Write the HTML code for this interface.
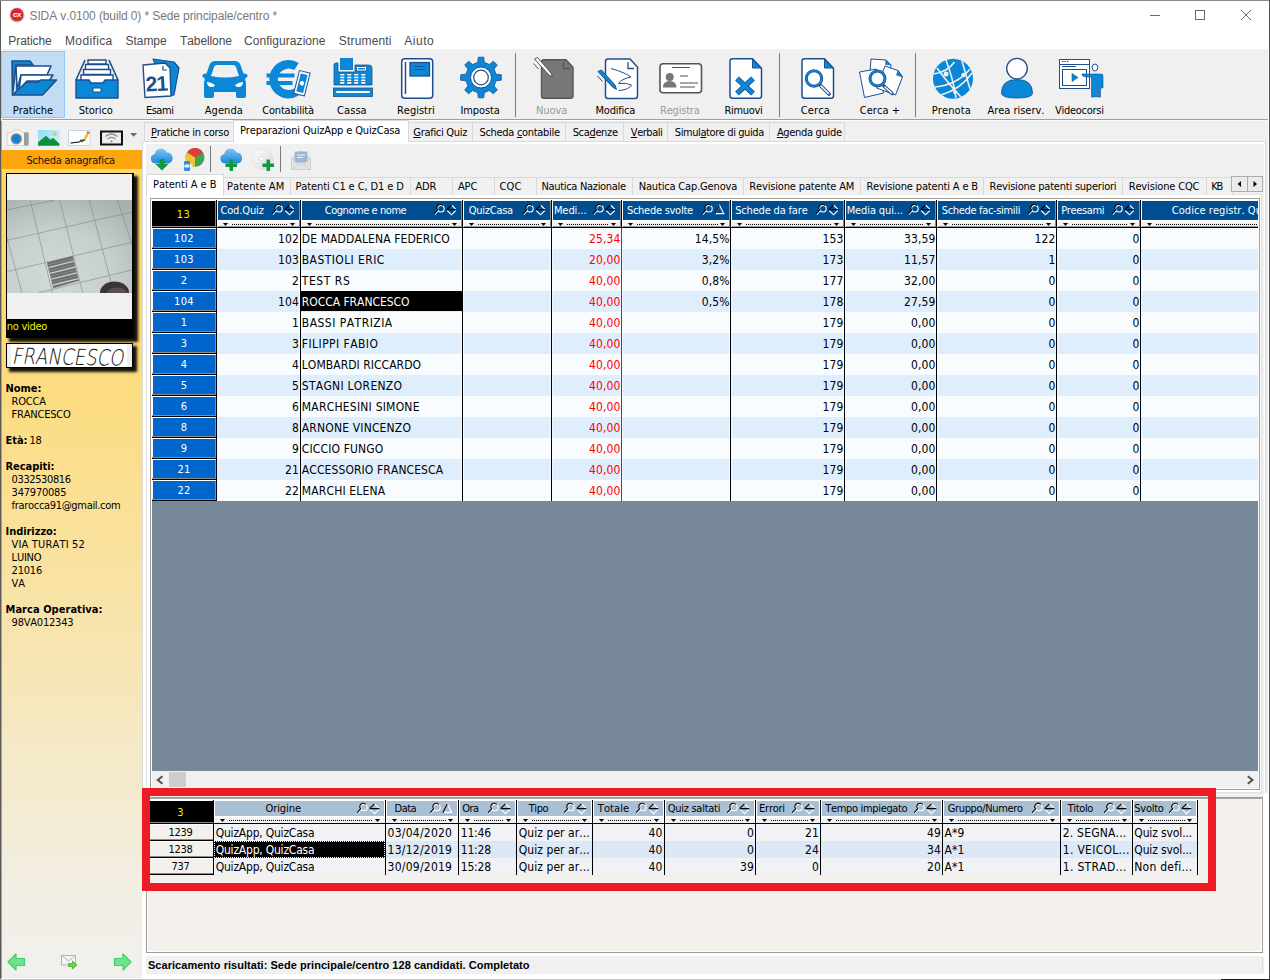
<!DOCTYPE html><html lang="it"><head><meta charset="utf-8"><title>SIDA v.0100 (build 0) * Sede principale/centro *</title><style>
*{box-sizing:border-box;margin:0;padding:0}
html,body{width:1270px;height:980px;overflow:hidden;background:#fff}
body{position:relative;font-family:'Liberation Sans',sans-serif;font-size:11px;color:#000;font-kerning:none}
.a{position:absolute}
.t{position:absolute;white-space:pre;line-height:1}
.tah{font-family:'DejaVu Sans Condensed','Liberation Sans',sans-serif}
svg{position:absolute;overflow:visible}
</style></head><body>
<div class="a" style="left:0px;top:0px;width:1270px;height:980px;background:#fff;"></div>
<div class="a" style="left:0px;top:0px;width:1px;height:980px;background:#5a5a5a;"></div>
<div class="a" style="left:1px;top:121px;width:1px;height:857px;background:#a2a2a2;"></div>
<div class="a" style="left:0px;top:0px;width:1270px;height:1px;background:#8a8a8a;"></div>
<div class="a" style="left:1269px;top:0px;width:1px;height:980px;background:#555;"></div>
<div class="a" style="left:0px;top:979px;width:1221px;height:1px;background:#c4c4c4;"></div>
<div class="a" style="left:1221px;top:979px;width:49px;height:1px;background:#1c1c1c;"></div>
<svg style="left:9px;top:7px" width="16" height="16" viewBox="0 0 16 16"><circle cx="8" cy="8" r="7.6" fill="#b9b9b9"/><circle cx="8" cy="7.7" r="6.4" fill="#e0202a"/><text x="8" y="10.200" font-family="Liberation Sans,sans-serif" font-size="8" font-weight="bold" fill="#fff" text-anchor="middle" letter-spacing="-.5">cx</text></svg>
<div class="t" style="left:29.5px;top:10px;font-size:12px;color:#7a7a7a;letter-spacing:-0.11px;">SIDA v.0100 (build 0) * Sede principale/centro *</div>
<svg style="left:1140px;top:0" width="128" height="30" viewBox="0 0 128 30"><path d="M10 15.5h10" stroke="#6a6a6a" stroke-width="1"/><rect x="55.5" y="10.5" width="9" height="9" fill="none" stroke="#6a6a6a" stroke-width="1"/><path d="M101 10l10 10M111 10l-10 10" stroke="#6a6a6a" stroke-width="1"/></svg>
<div class="t" style="left:8.3px;top:35px;font-size:12px;color:#4a4a4a;letter-spacing:-0.076px;">Pratiche</div>
<div class="t" style="left:65px;top:35px;font-size:12px;color:#4a4a4a;letter-spacing:0.373px;">Modifica</div>
<div class="t" style="left:125.6px;top:35px;font-size:12px;color:#4a4a4a;letter-spacing:-0.072px;">Stampe</div>
<div class="t" style="left:180px;top:35px;font-size:12px;color:#4a4a4a;letter-spacing:-0.097px;">Tabellone</div>
<div class="t" style="left:244px;top:35px;font-size:12px;color:#4a4a4a;letter-spacing:0.06px;">Configurazione</div>
<div class="t" style="left:338.8px;top:35px;font-size:12px;color:#4a4a4a;letter-spacing:0.168px;">Strumenti</div>
<div class="t" style="left:404.3px;top:35px;font-size:12px;color:#4a4a4a;letter-spacing:0.535px;">Aiuto</div>
<div class="a" style="left:2px;top:49px;width:1266px;height:70px;background:#f0f0f0;"></div>
<div class="a" style="left:2px;top:119px;width:1266px;height:1px;background:#a0a0a0;"></div>
<div class="a" style="left:2px;top:120px;width:1266px;height:1px;background:#fafafa;"></div>
<div class="a" style="left:2px;top:121px;width:1266px;height:857px;background:#f0f0f0;"></div>
<div class="a" style="left:1px;top:51px;width:64px;height:67px;background:#c1dcf3;border:1px solid #92c9f5;"></div>
<div class="a" style="left:515px;top:53px;width:1px;height:64px;background:#7b7b7b;"></div>
<div class="a" style="left:779px;top:53px;width:1px;height:64px;background:#7b7b7b;"></div>
<div class="a" style="left:915px;top:53px;width:1px;height:64px;background:#7b7b7b;"></div>
<div class="t" style="left:12.8px;top:105px;font-size:11px;color:#000;font-family:'DejaVu Sans Condensed','Liberation Sans',sans-serif;letter-spacing:-0.035px;">Pratiche</div>
<div class="t" style="left:78.8px;top:105px;font-size:11px;color:#000;font-family:'DejaVu Sans Condensed','Liberation Sans',sans-serif;letter-spacing:-0.072px;">Storico</div>
<div class="t" style="left:145.9px;top:105px;font-size:11px;color:#000;font-family:'DejaVu Sans Condensed','Liberation Sans',sans-serif;letter-spacing:-0.469px;">Esami</div>
<div class="t" style="left:204.8px;top:105px;font-size:11px;color:#000;font-family:'DejaVu Sans Condensed','Liberation Sans',sans-serif;letter-spacing:0.047px;">Agenda</div>
<div class="t" style="left:262.2px;top:105px;font-size:11px;color:#000;font-family:'DejaVu Sans Condensed','Liberation Sans',sans-serif;letter-spacing:-0.177px;">Contabilità</div>
<div class="t" style="left:337.1px;top:105px;font-size:11px;color:#000;font-family:'DejaVu Sans Condensed','Liberation Sans',sans-serif;letter-spacing:0.06px;">Cassa</div>
<div class="t" style="left:397.0px;top:105px;font-size:11px;color:#000;font-family:'DejaVu Sans Condensed','Liberation Sans',sans-serif;letter-spacing:-0.008px;">Registri</div>
<div class="t" style="left:460.5px;top:105px;font-size:11px;color:#000;font-family:'DejaVu Sans Condensed','Liberation Sans',sans-serif;letter-spacing:-0.117px;">Imposta</div>
<div class="t" style="left:536.0px;top:105px;font-size:11px;color:#9a9a9a;font-family:'DejaVu Sans Condensed','Liberation Sans',sans-serif;letter-spacing:-0.089px;">Nuova</div>
<div class="t" style="left:595.5px;top:105px;font-size:11px;color:#000;font-family:'DejaVu Sans Condensed','Liberation Sans',sans-serif;letter-spacing:-0.225px;">Modifica</div>
<div class="t" style="left:660.0px;top:105px;font-size:11px;color:#9a9a9a;font-family:'DejaVu Sans Condensed','Liberation Sans',sans-serif;letter-spacing:-0.196px;">Registra</div>
<div class="t" style="left:724.5px;top:105px;font-size:11px;color:#000;font-family:'DejaVu Sans Condensed','Liberation Sans',sans-serif;letter-spacing:-0.317px;">Rimuovi</div>
<div class="t" style="left:800.7px;top:105px;font-size:11px;color:#000;font-family:'DejaVu Sans Condensed','Liberation Sans',sans-serif;letter-spacing:0.139px;">Cerca</div>
<div class="t" style="left:859.7px;top:105px;font-size:11px;color:#000;font-family:'DejaVu Sans Condensed','Liberation Sans',sans-serif;letter-spacing:0.053px;">Cerca +</div>
<div class="t" style="left:931.8px;top:105px;font-size:11px;color:#000;font-family:'DejaVu Sans Condensed','Liberation Sans',sans-serif;letter-spacing:0.089px;">Prenota</div>
<div class="t" style="left:987.5px;top:105px;font-size:11px;color:#000;font-family:'DejaVu Sans Condensed','Liberation Sans',sans-serif;letter-spacing:-0.034px;">Area riserv.</div>
<div class="t" style="left:1055.0px;top:105px;font-size:11px;color:#000;font-family:'DejaVu Sans Condensed','Liberation Sans',sans-serif;letter-spacing:-0.275px;">Videocorsi</div>
<svg style="left:0;top:0" width="1270" height="120" viewBox="0 0 1270 120"><path d="M12 61h18l3 4h-17l-3.5 30z" fill="#0b87d8" stroke="#1d4f8d" stroke-width="1.6" stroke-linejoin="round"/><path d="M16 66h35l-4 9h-26l-4 15z" fill="#fff" stroke="#1d4f8d" stroke-width="1.6" stroke-linejoin="round"/><path d="M21 75h32l-4 6h-22l-8 9z" fill="#fff" stroke="#1d4f8d" stroke-width="1.6" stroke-linejoin="round"/><path d="M12.5 95l14-13h12l2-2h16l-14 15z" fill="#0b87d8" stroke="#1d4f8d" stroke-width="1.6" stroke-linejoin="round"/><path d="M76 80l9-20M118 80l-9-20" stroke="#1d4f8d" stroke-width="1.6" fill="none"/><path d="M88 60h18v4h-18zM85.5 64.500h23v5h-23zM83.500 69.500h27v5h-27zM81 75h32v9h-32z" fill="#fff" stroke="#1d4f8d" stroke-width="1.4"/><path d="M76 80h13l2 3h12l2-3h13v18h-42z" fill="#0b87d8" stroke="#1d4f8d" stroke-width="1.4" stroke-linejoin="round"/><rect x="93" y="88" width="8" height="4" rx="1" fill="#fff" stroke="#1d4f8d" stroke-width="1"/><path d="M153 59l21 3 5 6-5 27-5 1z" fill="#0b87d8" stroke="#1d4f8d" stroke-width="1.2" stroke-linejoin="round"/><path d="M143 65l22-2 5 5 1 28-26 1.500z" fill="#fff" stroke="#1d4f8d" stroke-width="1.4" stroke-linejoin="round"/><path d="M163 66v4h4" fill="none" stroke="#1d4f8d" stroke-width="1.2"/><text x="156.300" y="91" font-family="Liberation Sans,sans-serif" font-weight="bold" font-size="21" fill="#1d4f8d" text-anchor="middle" transform="rotate(-3 156 82)" letter-spacing="-1">21</text><path d="M204 78q-2-1-1.500-3 1-2 4-1.500l3-8.500q1.500-4 6-4h19q4.500 0 6 4l3 8.500q3-.5 4 1.500.5 2-1.500 3l-1 1q1 2 1 5v12q0 2-2 2h-6q-2 0-2-2v-4h-22v4q0 2-2 2h-6q-2 0-2-2v-12q0-3 1-5z" fill="#0b87d8"/><path d="M211 76l3-9q.7-2 3-2h16q2.300 0 3 2l3 9q-7 1.500-14 1.500t-14-1.500z" fill="#f0f0f0"/><path d="M207 82q4 0 8 3-.5 2-3 2-5 0-5-5zM243 82q-4 0-8 3 .5 2 3 2 5 0 5-5z" fill="#fff"/><path d="M296.500 66.500a15 15 0 1 0 0 25.500" fill="none" stroke="#0b87d8" stroke-width="8.500"/><path d="M266.500 73.500h28v4h-28zM266.500 81h26v4h-26z" fill="#0b87d8"/><g transform="rotate(14 302 83)"><rect x="296.500" y="71.500" width="11" height="23.500" fill="#fff" stroke="#1d4f8d" stroke-width="1"/><rect x="298.500" y="74" width="7" height="18.500" fill="#0b87d8"/><circle cx="302" cy="83.300" r="2.300" fill="#fff"/></g><rect x="340" y="58" width="13" height="12" fill="#0b87d8"/><path d="M334 65q0-2 2-2h2v9h17v-7h14q3 0 3 3v17h-38z" fill="#0b87d8" stroke="#1d4f8d" stroke-width=".8"/><rect x="356.500" y="66.500" width="10" height="4.500" rx="1" fill="#fff" stroke="#1d4f8d" stroke-width=".8"/><rect x="358" y="68" width="7" height="1.500" fill="#0b87d8"/><rect x="340" y="74.0" width="4.500" height="1.600" rx=".8" fill="#fff"/><rect x="340" y="76.7" width="4.500" height="1.600" rx=".8" fill="#fff"/><rect x="340" y="79.4" width="4.500" height="1.600" rx=".8" fill="#fff"/><rect x="340" y="82.1" width="4.500" height="1.600" rx=".8" fill="#fff"/><rect x="347" y="74.0" width="4.500" height="1.600" rx=".8" fill="#fff"/><rect x="347" y="76.7" width="4.500" height="1.600" rx=".8" fill="#fff"/><rect x="347" y="79.4" width="4.500" height="1.600" rx=".8" fill="#fff"/><rect x="347" y="82.1" width="4.500" height="1.600" rx=".8" fill="#fff"/><rect x="354" y="74.0" width="4.500" height="1.600" rx=".8" fill="#fff"/><rect x="354" y="76.7" width="4.500" height="1.600" rx=".8" fill="#fff"/><rect x="354" y="79.4" width="4.500" height="1.600" rx=".8" fill="#fff"/><rect x="354" y="82.1" width="4.500" height="1.600" rx=".8" fill="#fff"/><rect x="361" y="74.0" width="4.500" height="1.600" rx=".8" fill="#fff"/><rect x="361" y="76.7" width="4.500" height="1.600" rx=".8" fill="#fff"/><rect x="361" y="79.4" width="4.500" height="1.600" rx=".8" fill="#fff"/><rect x="361" y="82.1" width="4.500" height="1.600" rx=".8" fill="#fff"/><rect x="333.500" y="88" width="39" height="8.500" fill="#0b87d8" stroke="#1d4f8d" stroke-width=".8"/><rect x="336" y="91" width="34" height="2" rx="1" fill="#fff"/><rect x="401.700" y="58.700" width="31" height="39.500" rx="3" fill="#fff" stroke="#1d4f8d" stroke-width="1.500"/><path d="M405.500 62v32" stroke="#1d4f8d" stroke-width="1.500"/><rect x="410" y="62.500" width="19.500" height="13.500" fill="#0b87d8" stroke="#1d4f8d" stroke-width="1.300"/><path d="M414.500 66.500h10M414.500 69.500h10" stroke="#1d4f8d" stroke-width="1.200"/><path d="M478.27 57.18 L483.73 57.18 L484.26 62.35 L489.41 64.48 L493.44 61.20 L497.30 65.06 L494.02 69.09 L496.15 74.24 L501.32 74.77 L501.32 80.23 L496.15 80.76 L494.02 85.91 L497.30 89.94 L493.44 93.80 L489.41 90.52 L484.26 92.65 L483.73 97.82 L478.27 97.82 L477.74 92.65 L472.59 90.52 L468.56 93.80 L464.70 89.94 L467.98 85.91 L465.85 80.76 L460.68 80.23 L460.68 74.77 L465.85 74.24 L467.98 69.09 L464.70 65.06 L468.56 61.20 L472.59 64.48 L477.74 62.35Z" fill="#0b87d8" stroke="#1d4f8d" stroke-width=".8" stroke-linejoin="round"/><circle cx="481" cy="77.500" r="10.500" fill="#fff" stroke="#1d4f8d" stroke-width="1"/><circle cx="481" cy="77.500" r="7.300" fill="#fff" stroke="#1d4f8d" stroke-width="1.200"/><path d="M544 59.700h22l7 7.500v28.500q0 2.500-2.500 2.500h-26.500q-2.500 0-2.500-2.500v-33.500q0-2.500 2.500-2.500z" fill="#777" stroke="#555" stroke-width="1.400"/><path d="M563.500 62v6.500h6.500" fill="none" stroke="#555" stroke-width="1.400"/><path d="M534.500 59l3-1.500 13.500 15.500 1.500 4-3.500-2z" fill="#fff" stroke="#555" stroke-width="1"/><path d="M533.500 63.500l5 5.500" stroke="#555" stroke-width="1"/><path d="M608 59h22l7.500 8v29q0 2.500-2.500 2.500h-27q-2.500 0-2.500-2.500v-34.500q0-2.500 2.500-2.500z" fill="#fff" stroke="#1d4f8d" stroke-width="1.500"/><path d="M628 62v6.500h6" fill="none" stroke="#1d4f8d" stroke-width="1.300"/><path d="M611 68.500q14 4 20 8.500-10 2-12.500 6.500 8-1 13 1.500-3 5-13 5.500" fill="none" stroke="#1d4f8d" stroke-width="1"/><path d="M598 71.500l3.500-1.500 13.500 15 1.500 4.500-4-2.500z" fill="#0b87d8" stroke="#1d4f8d" stroke-width="1"/><path d="M597.500 76l5 5.500" stroke="#1d4f8d" stroke-width="1"/><rect x="660" y="63.800" width="41.500" height="29" rx="3" fill="#fff" stroke="#555" stroke-width="1.600"/><path d="M672 67.500h18" stroke="#555" stroke-width="1"/><path d="M680 76h8M680 83h18M680 87h15" stroke="#8a8a8a" stroke-width="1.400"/><circle cx="669.700" cy="77" r="4" fill="#777"/><path d="M663 87.500q0-6.500 6.700-6.500t6.700 6.500z" fill="#777"/><path d="M732.500 58.700h20l9 9.500v27.500q0 2.500-2.500 2.500h-26.500q-2.500 0-2.500-2.500v-34.500q0-2.500 2.500-2.500z" fill="#fff" stroke="#1d4f8d" stroke-width="1.500"/><path d="M752.500 59.500v8.500h8.500z" fill="#0b87d8" stroke="#1d4f8d" stroke-width="1"/><path d="M737 78.500l16 15M753 78.500l-16 15" stroke="#1d4f8d" stroke-width="5.500"/><path d="M737 78.500l16 15M753 78.500l-16 15" stroke="#0b87d8" stroke-width="3.800"/><path d="M804.500 58.700h20l9 9.500v27.500q0 2.500-2.500 2.500h-26.500q-2.500 0-2.500-2.500v-34.500q0-2.500 2.500-2.500z" fill="#fff" stroke="#1d4f8d" stroke-width="1.500"/><path d="M824.500 59.500v8.500h8.500z" fill="#0b87d8" stroke="#1d4f8d" stroke-width="1"/><path d="M820 85l9 9" stroke="#1d4f8d" stroke-width="3.600" stroke-linecap="round"/><path d="M821 86l7.500 7.500" stroke="#fff" stroke-width="1.600" stroke-linecap="round"/><circle cx="814" cy="78.500" r="7.700" fill="#fff" stroke="#1d4f8d" stroke-width="3"/><circle cx="814" cy="78.500" r="7.700" fill="none" stroke="#0b87d8" stroke-width="1.600"/><path d="M871 59l15 1 5 5-2 22-20-2z" fill="#fff" stroke="#1d4f8d" stroke-width="1"/><path d="M886 60l5 5-5.500-.5z" fill="#0b87d8" stroke="#1d4f8d" stroke-width=".6"/><path d="M859.500 72l17-3 7 24-19 4.500z" fill="#fff" stroke="#1d4f8d" stroke-width="1"/><path d="M885 66l13 4.500 4.500 6.500-7 18-19-7z" fill="#fff" stroke="#1d4f8d" stroke-width="1"/><path d="M898 70.500l4.500 6.500-6-2z" fill="#0b87d8" stroke="#1d4f8d" stroke-width=".6"/><path d="M884 86l8 7.500" stroke="#1d4f8d" stroke-width="3.400" stroke-linecap="round"/><path d="M885 87l6.500 6" stroke="#fff" stroke-width="1.500" stroke-linecap="round"/><circle cx="877.500" cy="78.500" r="7.500" fill="#fff" stroke="#1d4f8d" stroke-width="3"/><circle cx="877.500" cy="78.500" r="7.500" fill="none" stroke="#0b87d8" stroke-width="1.600"/><circle cx="953" cy="78.700" r="20" fill="#0b87d8"/><g stroke="#f0f0f0" stroke-width="1.600" fill="none"><path d="M933.500 74q14-2 21-12M935 87q22-2 35-18M941 95q20-6 31-22M946 60q8 22 10 38M962 61q4 14 8 28M937 68q10 14 24 29"/></g><circle cx="946" cy="74" r="2.500" fill="#f0f0f0"/><circle cx="963.500" cy="75" r="2.200" fill="#f0f0f0"/><circle cx="955" cy="92" r="2" fill="#f0f0f0"/><path d="M1001.500 93q0-13.500 15.500-13.500t15.500 13.500q0 5-15.500 5t-15.500-5z" fill="#0b87d8" stroke="#1d4f8d" stroke-width=".8"/><circle cx="1017" cy="68.600" r="10.300" fill="#fff" stroke="#1d4f8d" stroke-width="1.300"/><rect x="1059.500" y="59.500" width="30" height="29" fill="#fff" stroke="#1d4f8d" stroke-width="1"/><path d="M1059.500 64.500h30M1062 61.500h1.500M1064.500 61.500h1.500M1067 61.500h1.500" stroke="#1d4f8d" stroke-width="1"/><path d="M1062 66.500h14" stroke="#1d4f8d" stroke-width="1"/><rect x="1062.500" y="69.500" width="24" height="16" fill="#fff" stroke="#1d4f8d" stroke-width="1"/><path d="M1072 73.500l6 4-6 4z" fill="#0b87d8" stroke="#1d4f8d" stroke-width=".6"/><ellipse cx="1095" cy="67.500" rx="2.800" ry="3.500" fill="#fff" stroke="#1d4f8d" stroke-width="1"/><path d="M1082 74h19q2 0 2 2v12h-2.500v9h-4v-9h-1v9h-4v-20h-6l-3.500-1.500z" fill="#0b87d8" stroke="#1d4f8d" stroke-width=".6"/></svg>
<svg style="left:0;top:0" width="145" height="150" viewBox="0 0 145 150"><path d="M7 133.500q0-1 1-1h3.500l2-2.500h7l2 2.500h5q1 0 1 1v11q0 1-1 1h-19.500q-1 0-1-1z" fill="#f4f4f4" stroke="#c9c9c9" stroke-width=".8"/><rect x="24" y="132.500" width="4.500" height="13" rx="1" fill="#9c9c9c"/><circle cx="16.300" cy="138.800" r="5.600" fill="#8a8a8a"/><circle cx="16.300" cy="138.800" r="4.200" fill="#0d83d6"/><defs><linearGradient id="sky" x1="0" y1="0" x2="1" y2="1"><stop offset="0" stop-color="#8fdcf6"/><stop offset="1" stop-color="#d9f3fb"/></linearGradient></defs><rect x="38" y="130" width="21.500" height="15.800" fill="url(#sky)"/><circle cx="54.500" cy="134" r="2" fill="#f0c04a"/><path d="M38 145.800v-3.500l8-6.500 4.500 4 2.500-2 6.500 6v2z" fill="#0b9140"/><rect x="68.500" y="130.500" width="21.500" height="15" fill="#fff" stroke="#c9d3e6" stroke-width="1"/><path d="M70.500 143.200q4-1 6-.8t3.500-.8l1-1.500 1 1.500 1.500-2.500" fill="none" stroke="#333" stroke-width="1.200"/><path d="M83.500 139.500l3.300-7 2.200 1-3.300 7-2.400.8z" fill="#eeb23d"/><path d="M86.800 132.500l.6-1.300 2.200 1-.6 1.300z" fill="#e02a3a"/><path d="M83.300 141.300l.2-1.800 2.200 1z" fill="#333"/><rect x="101" y="131.500" width="21" height="13" fill="#ececec" stroke="#111" stroke-width="2"/><g fill="none" stroke="#8c8c8c" stroke-width="1.300"><path d="M105.500 136.500q6-5 12 0"/><path d="M107.500 139q4-3.300 8 0"/></g><circle cx="111.500" cy="141.500" r="1.100" fill="#8c8c8c"/><path d="M130 133h7.200l-3.600 3.800z" fill="#6d6d6d"/></svg>
<div class="a" style="left:2px;top:150px;width:140px;height:19px;background:#fea60d;"></div>
<div class="t" style="left:26.4px;top:155px;font-size:11px;color:#1a1200;font-family:'DejaVu Sans Condensed','Liberation Sans',sans-serif;letter-spacing:-0.209px;">Scheda anagrafica</div>
<div class="a" style="left:2px;top:169px;width:140px;height:809px;background:linear-gradient(180deg,#ffd966 0%,#fcdd84 30%,#f7e5b2 60%,#f2eee2 88%,#f0f0ee 100%);"></div>
<div class="a" style="left:6px;top:173px;width:128px;height:165px;background:#000;box-shadow:3px 3px 2.500px 0.500px rgba(0,0,0,.92);"></div>
<div class="a" style="left:7px;top:174px;width:125px;height:145px;background:#f0f0f0;"></div>
<svg style="left:0;top:0" width="145" height="300" viewBox="0 0 145 300"><defs><radialGradient id="cg" cx=".38" cy=".8" r=".95"><stop offset="0" stop-color="#d3dbd9"/><stop offset=".5" stop-color="#c6cfcd"/><stop offset="1" stop-color="#a5b0af"/></radialGradient><clipPath id="pc"><rect x="7" y="200" width="125" height="93"/></clipPath></defs><g clip-path="url(#pc)"><rect x="7" y="200" width="125" height="93" fill="url(#cg)"/><g stroke="#7b8684" stroke-width=".7" fill="none" opacity=".8"><path d="M6.800 210L55 200M6.800 240.400L132.400 211.900M6.800 271.600L132.400 242.200M38.600 292.800L132.400 269.800"/><path d="M30.300 200.800L52.400 292.800M59.700 200L82.700 292.800M89.200 200L114 292.800M117.600 200L132.400 246M6.800 237.600L22 292.800"/></g><path d="M46.900 262.400L72.600 256L79 280.800L53.300 288.200Z" fill="#6b7170"/><g stroke="#c9cfce" stroke-width="1.300"><path d="M48.500 267.600L73.800 261.200M50 273.400L75.300 267M51.500 279.200L76.800 272.800M53 285L78.300 278.600"/></g><g stroke="#8f9695" stroke-width=".6"><path d="M47.700 265L73.200 258.600M49.300 270.600L74.600 264.200M50.800 276.400L76.100 270M52.300 282.200L77.600 275.800"/></g><ellipse cx="114.500" cy="292.500" rx="14.500" ry="11" fill="#3d3435"/><ellipse cx="117" cy="293.500" rx="10" ry="6" fill="#5a4f50"/></g></svg>
<div class="t" style="left:6.8px;top:321px;font-size:11px;color:#f2f200;font-family:'DejaVu Sans Condensed','Liberation Sans',sans-serif;letter-spacing:-0.274px;">no video</div>
<div class="a" style="left:6px;top:343px;width:127px;height:25px;background:#fff;border:1px solid #000;box-shadow:3px 3px 2.500px 0.500px rgba(0,0,0,.92);"></div>
<div class="a" style="left:7px;top:344px;width:4px;height:23px;background:#efefef;"></div>
<div class="a" style="left:127px;top:344px;width:5px;height:23px;background:#efefef;"></div>
<svg style="left:0;top:340px" width="145" height="32" viewBox="0 340 145 32"><text x="11.500" y="364.500" font-family="DejaVu Sans Light,DejaVu Sans,Liberation Sans,sans-serif" font-weight="200" font-size="22" textLength="112" lengthAdjust="spacingAndGlyphs" fill="#111" stroke="none" transform="translate(64.500 0) skewX(-10) rotate(1 60 356)">FRANCESCO</text></svg>
<div class="t" style="left:5.5px;top:383px;font-size:11px;color:#000;font-family:'DejaVu Sans Condensed','Liberation Sans',sans-serif;font-weight:bold;letter-spacing:-0.05px;">Nome:</div>
<div class="t" style="left:11.6px;top:396px;font-size:11px;color:#000;font-family:'DejaVu Sans Condensed','Liberation Sans',sans-serif;letter-spacing:-0.22px;">ROCCA</div>
<div class="t" style="left:11.6px;top:409px;font-size:11px;color:#000;font-family:'DejaVu Sans Condensed','Liberation Sans',sans-serif;letter-spacing:-0.22px;">FRANCESCO</div>
<div class="t" style="left:5.5px;top:435px;font-size:11px;color:#000;font-family:'DejaVu Sans Condensed','Liberation Sans',sans-serif;font-weight:bold;letter-spacing:-0.05px;">Età:</div>
<div class="t" style="left:29.5px;top:435px;font-size:11px;color:#000;font-family:'DejaVu Sans Condensed','Liberation Sans',sans-serif;letter-spacing:-0.22px;">18</div>
<div class="t" style="left:5.5px;top:461px;font-size:11px;color:#000;font-family:'DejaVu Sans Condensed','Liberation Sans',sans-serif;font-weight:bold;letter-spacing:-0.05px;">Recapiti:</div>
<div class="t" style="left:11.6px;top:474px;font-size:11px;color:#000;font-family:'DejaVu Sans Condensed','Liberation Sans',sans-serif;letter-spacing:-0.395px;">0332530816</div>
<div class="t" style="left:11.6px;top:487px;font-size:11px;color:#000;font-family:'DejaVu Sans Condensed','Liberation Sans',sans-serif;letter-spacing:-0.22px;">347970085</div>
<div class="t" style="left:11.6px;top:500px;font-size:11px;color:#000;font-family:'DejaVu Sans Condensed','Liberation Sans',sans-serif;letter-spacing:-0.311px;">frarocca91@gmail.com</div>
<div class="t" style="left:5.5px;top:526px;font-size:11px;color:#000;font-family:'DejaVu Sans Condensed','Liberation Sans',sans-serif;font-weight:bold;letter-spacing:-0.05px;">Indirizzo:</div>
<div class="t" style="left:11.6px;top:539px;font-size:11px;color:#000;font-family:'DejaVu Sans Condensed','Liberation Sans',sans-serif;letter-spacing:0.165px;">VIA TURATI 52</div>
<div class="t" style="left:11.6px;top:552px;font-size:11px;color:#000;font-family:'DejaVu Sans Condensed','Liberation Sans',sans-serif;letter-spacing:-0.22px;">LUINO</div>
<div class="t" style="left:11.6px;top:565px;font-size:11px;color:#000;font-family:'DejaVu Sans Condensed','Liberation Sans',sans-serif;letter-spacing:-0.22px;">21016</div>
<div class="t" style="left:11.6px;top:578px;font-size:11px;color:#000;font-family:'DejaVu Sans Condensed','Liberation Sans',sans-serif;letter-spacing:-0.22px;">VA</div>
<div class="t" style="left:5.5px;top:604px;font-size:11px;color:#000;font-family:'DejaVu Sans Condensed','Liberation Sans',sans-serif;font-weight:bold;letter-spacing:0.042px;">Marca Operativa:</div>
<div class="t" style="left:11.6px;top:617px;font-size:11px;color:#000;font-family:'DejaVu Sans Condensed','Liberation Sans',sans-serif;letter-spacing:-0.22px;">98VA012343</div>
<svg style="left:0;top:940px" width="145" height="40" viewBox="0 940 145 40"><path d="M0 8.500L8 0.500V5h8.500v7H8v4.500z" transform="translate(8 953.5)" fill="#6fe38a" stroke="#3fcf6e" stroke-width="1.200" stroke-linejoin="round"/><path d="M0 8.500L8 0.500V5h8.500v7H8v4.500z" transform="translate(114.5 953.5) translate(16.500 0) scale(-1 1)" fill="#6fe38a" stroke="#3fcf6e" stroke-width="1.200" stroke-linejoin="round"/><rect x="61.500" y="955.500" width="14" height="9.500" fill="#f4f4f4" stroke="#b5b5b5" stroke-width="1"/><path d="M61.500 955.500l7 5.500 7-5.500" fill="none" stroke="#b5b5b5" stroke-width="1"/><path d="M68.500 963.500h4v-2.500l4.500 4-4.500 4v-2.500h-4z" fill="#63d84a" stroke="#3aa52c" stroke-width=".7"/></svg>
<div class="a" style="left:142px;top:141px;width:1124px;height:819px;background:#fff;border:1px solid #dadada;"></div>
<div class="a" style="left:146px;top:144px;width:1118px;height:814px;background:#f0f0f0;"></div>
<div class="a" style="left:144px;top:122px;width:90px;height:19px;background:#f0f0f0;border:1px solid #d9d9d9;border-bottom:none;"></div>
<div class="t" style="left:151px;top:127px;font-size:11px;color:#000;font-family:'DejaVu Sans Condensed','Liberation Sans',sans-serif;letter-spacing:-0.276px"><u>P</u>ratiche in corso</div>
<div class="a" style="left:408px;top:122px;width:65px;height:19px;background:#f0f0f0;border:1px solid #d9d9d9;border-bottom:none;"></div>
<div class="t" style="left:413.3px;top:127px;font-size:11px;color:#000;font-family:'DejaVu Sans Condensed','Liberation Sans',sans-serif;letter-spacing:-0.298px"><u>G</u>rafici Quiz</div>
<div class="a" style="left:472px;top:122px;width:94px;height:19px;background:#f0f0f0;border:1px solid #d9d9d9;border-bottom:none;"></div>
<div class="t" style="left:479.5px;top:127px;font-size:11px;color:#000;font-family:'DejaVu Sans Condensed','Liberation Sans',sans-serif;letter-spacing:-0.311px">Scheda <u>c</u>ontabile</div>
<div class="a" style="left:565px;top:122px;width:59px;height:19px;background:#f0f0f0;border:1px solid #d9d9d9;border-bottom:none;"></div>
<div class="t" style="left:572.7px;top:127px;font-size:11px;color:#000;font-family:'DejaVu Sans Condensed','Liberation Sans',sans-serif;letter-spacing:-0.348px">Sca<u>d</u>enze</div>
<div class="a" style="left:623px;top:122px;width:45px;height:19px;background:#f0f0f0;border:1px solid #d9d9d9;border-bottom:none;"></div>
<div class="t" style="left:630.8px;top:127px;font-size:11px;color:#000;font-family:'DejaVu Sans Condensed','Liberation Sans',sans-serif;letter-spacing:-0.454px"><u>V</u>erbali</div>
<div class="a" style="left:667px;top:122px;width:103px;height:19px;background:#f0f0f0;border:1px solid #d9d9d9;border-bottom:none;"></div>
<div class="t" style="left:674.8px;top:127px;font-size:11px;color:#000;font-family:'DejaVu Sans Condensed','Liberation Sans',sans-serif;letter-spacing:-0.411px">Simul<u>a</u>tore di guida</div>
<div class="a" style="left:769px;top:122px;width:76px;height:19px;background:#f0f0f0;border:1px solid #d9d9d9;border-bottom:none;"></div>
<div class="t" style="left:776.9px;top:127px;font-size:11px;color:#000;font-family:'DejaVu Sans Condensed','Liberation Sans',sans-serif;letter-spacing:-0.318px"><u>A</u>genda guide</div>
<div class="a" style="left:233px;top:120px;width:176px;height:22px;background:#fff;border:1px solid #d9d9d9;border-bottom:none;"></div>
<div class="t" style="left:240px;top:125px;font-size:11px;color:#000;font-family:'DejaVu Sans Condensed','Liberation Sans',sans-serif;letter-spacing:-0.142px">Preparazioni QuizApp e QuizCasa</div>
<svg style="left:0;top:140px" width="330" height="40" viewBox="0 140 330 40"><defs><linearGradient id="cl" x1="0" y1="0" x2="0" y2="1"><stop offset="0" stop-color="#7cc4f4"/><stop offset="1" stop-color="#1b86dd"/></linearGradient><linearGradient id="cd" x1="0" y1="0" x2="1" y2="1"><stop offset="0" stop-color="#fdfdfd"/><stop offset="1" stop-color="#d8d8d8"/></linearGradient></defs><path transform="translate(150.5 150)" d="M5 13.500a4.800 4.800 0 0 1-.8-9.500 6.500 6.500 0 0 1 12.300-1.500 5.600 5.600 0 0 1 1.500 11z" fill="url(#cl)"/><path d="M159.500 159h5v5h4l-6.500 6.500-6.500-6.500h4z" fill="#0f9a3c"/><circle cx="195" cy="157.500" r="9.500" fill="#3aa655"/><path d="M195 157.500l8-5a9.500 9.500 0 0 0-16 0z" fill="#e23b3b"/><path d="M195 157.500l-8-5a9.500 9.500 0 0 0 8 14.500z" fill="#f1c232"/><ellipse cx="187" cy="166" rx="5.500" ry="3" fill="#fafafa" stroke="#d5d5d5" stroke-width=".7"/><rect x="184" y="161" width="6" height="10" rx="1" fill="#2c8fe6"/><rect x="184.500" y="164.500" width="5" height="3" fill="#eaf4fd"/><path transform="translate(220 150)" d="M5 13.500a4.800 4.800 0 0 1-.8-9.500 6.500 6.500 0 0 1 12.300-1.500 5.600 5.600 0 0 1 1.500 11z" fill="url(#cl)"/><path d="M229.500 159.500h3.500v4h4v3.500h-4v4h-3.500v-4h-4v-3.500h4z" fill="#0f9a3c"/><circle cx="262.500" cy="159" r="10.500" fill="url(#cd)" stroke="#dcdcdc" stroke-width=".7"/><path d="M259 158.500l2.500-2.500 2.500 2.500-2.500 2.500z" fill="#fff" stroke="#cfcfcf" stroke-width=".7"/><path d="M266.500 159.500h3.500v4h4v3.500h-4v4h-3.500v-4h-4v-3.500h4z" fill="#0f9a3c"/><path d="M291.500 158l9.500-7.500 9.500 7.500v11.500h-19z" fill="#e4e4e4" stroke="#c9c9c9" stroke-width=".8"/><rect x="294.500" y="151.500" width="13" height="11" rx="1" fill="#9db7d3"/><path d="M297 155h8M297 157.500h6" stroke="#e9f0f7" stroke-width="1"/><path d="M291.500 169.500l9.500-7 9.500 7M291.500 158l7 6M310.500 158l-7 6" fill="none" stroke="#c9c9c9" stroke-width=".8"/></svg>
<div class="a" style="left:210px;top:146px;width:1px;height:26px;background:#7b7b7b;"></div>
<div class="a" style="left:280px;top:146px;width:1px;height:26px;background:#7b7b7b;"></div>
<div class="a" style="left:146px;top:194px;width:1116px;height:599px;background:#fff;border:1px solid #e2e2e2;"></div>
<div class="a" style="left:223px;top:177px;width:68px;height:18px;background:#f0f0f0;border:1px solid #d9d9d9;border-bottom:none;"></div>
<div class="t" style="left:227px;top:181px;font-size:11px;color:#000;font-family:'DejaVu Sans Condensed','Liberation Sans',sans-serif;letter-spacing:0.055px">Patente AM</div>
<div class="a" style="left:290px;top:177px;width:121px;height:18px;background:#f0f0f0;border:1px solid #d9d9d9;border-bottom:none;"></div>
<div class="t" style="left:295.4px;top:181px;font-size:11px;color:#000;font-family:'DejaVu Sans Condensed','Liberation Sans',sans-serif;letter-spacing:-0.107px">Patenti C1 e C, D1 e D</div>
<div class="a" style="left:410px;top:177px;width:43px;height:18px;background:#f0f0f0;border:1px solid #d9d9d9;border-bottom:none;"></div>
<div class="t" style="left:415.4px;top:181px;font-size:11px;color:#000;font-family:'DejaVu Sans Condensed','Liberation Sans',sans-serif;letter-spacing:-0.083px">ADR</div>
<div class="a" style="left:452px;top:177px;width:43px;height:18px;background:#f0f0f0;border:1px solid #d9d9d9;border-bottom:none;"></div>
<div class="t" style="left:457.9px;top:181px;font-size:11px;color:#000;font-family:'DejaVu Sans Condensed','Liberation Sans',sans-serif;letter-spacing:-0.078px">APC</div>
<div class="a" style="left:494px;top:177px;width:43px;height:18px;background:#f0f0f0;border:1px solid #d9d9d9;border-bottom:none;"></div>
<div class="t" style="left:499.5px;top:181px;font-size:11px;color:#000;font-family:'DejaVu Sans Condensed','Liberation Sans',sans-serif;letter-spacing:0.188px">CQC</div>
<div class="a" style="left:536px;top:177px;width:97px;height:18px;background:#f0f0f0;border:1px solid #d9d9d9;border-bottom:none;"></div>
<div class="t" style="left:541.4px;top:181px;font-size:11px;color:#000;font-family:'DejaVu Sans Condensed','Liberation Sans',sans-serif;letter-spacing:-0.31px">Nautica Nazionale</div>
<div class="a" style="left:632px;top:177px;width:112px;height:18px;background:#f0f0f0;border:1px solid #d9d9d9;border-bottom:none;"></div>
<div class="t" style="left:638.7px;top:181px;font-size:11px;color:#000;font-family:'DejaVu Sans Condensed','Liberation Sans',sans-serif;letter-spacing:-0.167px">Nautica Cap.Genova</div>
<div class="a" style="left:743px;top:177px;width:118px;height:18px;background:#f0f0f0;border:1px solid #d9d9d9;border-bottom:none;"></div>
<div class="t" style="left:749.3px;top:181px;font-size:11px;color:#000;font-family:'DejaVu Sans Condensed','Liberation Sans',sans-serif;letter-spacing:-0.156px">Revisione patente AM</div>
<div class="a" style="left:860px;top:177px;width:124px;height:18px;background:#f0f0f0;border:1px solid #d9d9d9;border-bottom:none;"></div>
<div class="t" style="left:866.4px;top:181px;font-size:11px;color:#000;font-family:'DejaVu Sans Condensed','Liberation Sans',sans-serif;letter-spacing:-0.166px">Revisione patenti A e B</div>
<div class="a" style="left:983px;top:177px;width:140px;height:18px;background:#f0f0f0;border:1px solid #d9d9d9;border-bottom:none;"></div>
<div class="t" style="left:989.5px;top:181px;font-size:11px;color:#000;font-family:'DejaVu Sans Condensed','Liberation Sans',sans-serif;letter-spacing:-0.223px">Revisione patenti superiori</div>
<div class="a" style="left:1122px;top:177px;width:85px;height:18px;background:#f0f0f0;border:1px solid #d9d9d9;border-bottom:none;"></div>
<div class="t" style="left:1128.7px;top:181px;font-size:11px;color:#000;font-family:'DejaVu Sans Condensed','Liberation Sans',sans-serif;letter-spacing:-0.155px">Revisione CQC</div>
<div class="a" style="left:1206px;top:177px;width:27px;height:18px;background:#f0f0f0;border:1px solid #d9d9d9;border-bottom:none;"></div>
<div class="t" style="left:1211.3px;top:181px;font-size:11px;color:#000;font-family:'DejaVu Sans Condensed','Liberation Sans',sans-serif;letter-spacing:-1.381px">KB</div>
<div class="a" style="left:146px;top:174px;width:78px;height:22px;background:#fff;border:1px solid #d9d9d9;border-bottom:none;"></div>
<div class="t" style="left:153px;top:179px;font-size:11px;color:#000;font-family:'DejaVu Sans Condensed','Liberation Sans',sans-serif;letter-spacing:-0.04px">Patenti A e B</div>
<div class="a" style="left:1231px;top:176px;width:17px;height:16px;background:#ebebeb;border:1px solid #adadad;"></div>
<div class="a" style="left:1247px;top:176px;width:16px;height:16px;background:#ebebeb;border:1px solid #adadad;"></div>
<svg style="left:1231px;top:176px" width="32" height="16" viewBox="0 0 32 16"><path d="M10 5v6l-3.500-3z M22.500 5v6l3.500-3z" fill="#000"/></svg>
<div class="a" style="left:150px;top:198px;width:1110px;height:592px;background:#fff;border:1px solid #a0a0a0;"></div>
<div class="a" style="left:152px;top:200px;width:1106px;height:571px;background:#778899;"></div>
<div class="a" style="left:152px;top:200px;width:1106px;height:28px;background:#fff;"></div>
<div class="a" style="left:152px;top:201px;width:63px;height:25px;background:#000;"></div>
<div class="a" style="left:215px;top:201px;width:1px;height:26px;background:#8c8c8c;"></div>
<div class="a" style="left:152px;top:226px;width:64px;height:1px;background:#8c8c8c;"></div>
<div class="t" style="left:152px;top:209px;font-size:11px;color:#f2f200;font-family:'DejaVu Sans Condensed','Liberation Sans',sans-serif;letter-spacing:0.5px;width:63px;text-align:center;">13</div>
<svg style="left:0;top:195px" width="1270" height="40" viewBox="0 195 1270 40"><rect x="218" y="201" width="81" height="19" fill="#004e92"/><path d="M272.8 214.5L276.2 210.60000000000002" stroke="#fff" stroke-width="1.200"/><circle cx="278.9" cy="208.70000000000002" r="3.300" fill="none" stroke="#fff" stroke-width="1.100"/><path d="M272.2 213.9L275.7 210.10000000000002" stroke="#000" stroke-width="1.100"/><path d="M275.6 210.0a3.300 3.300 0 1 1 5.200 -4.300" fill="none" stroke="#000" stroke-width="1.100"/><path d="M289.5 205.0L294.0 209.3M285.2 210.5L289.5 214.8L293.8 210.5" fill="none" stroke="#fff" stroke-width="1.100"/><path d="M285.0 209.3L289.5 205.0M284.7 209.8H294.3" fill="none" stroke="#000" stroke-width="1.100"/><rect x="218" y="222" width="81" height="5" fill="#f0f0f0"/><path d="M223 223h5l-2.500 3z" fill="#000"/><path d="M290 223h5l-2.500 3z" fill="#000"/><path d="M232 224.5H288" stroke="#000" stroke-width="1" stroke-dasharray="1 1"/><rect x="218" y="226" width="81" height="1" fill="#9a9a9a"/><rect x="299" y="201" width="1" height="26" fill="#8c8c8c"/><rect x="302" y="201" width="159" height="19" fill="#004e92"/><path d="M434.8 214.5L438.2 210.60000000000002" stroke="#fff" stroke-width="1.200"/><circle cx="440.9" cy="208.70000000000002" r="3.300" fill="none" stroke="#fff" stroke-width="1.100"/><path d="M434.2 213.9L437.7 210.10000000000002" stroke="#000" stroke-width="1.100"/><path d="M437.6 210.0a3.300 3.300 0 1 1 5.200 -4.300" fill="none" stroke="#000" stroke-width="1.100"/><path d="M451.5 205.0L456.0 209.3M447.2 210.5L451.5 214.8L455.8 210.5" fill="none" stroke="#fff" stroke-width="1.100"/><path d="M447.0 209.3L451.5 205.0M446.7 209.8H456.3" fill="none" stroke="#000" stroke-width="1.100"/><rect x="302" y="222" width="159" height="5" fill="#f0f0f0"/><path d="M307 223h5l-2.500 3z" fill="#000"/><path d="M452 223h5l-2.500 3z" fill="#000"/><path d="M316 224.5H450" stroke="#000" stroke-width="1" stroke-dasharray="1 1"/><rect x="302" y="226" width="159" height="1" fill="#9a9a9a"/><rect x="461" y="201" width="1" height="26" fill="#8c8c8c"/><rect x="464" y="201" width="86" height="19" fill="#004e92"/><path d="M523.8 214.5L527.2 210.60000000000002" stroke="#fff" stroke-width="1.200"/><circle cx="529.9" cy="208.70000000000002" r="3.300" fill="none" stroke="#fff" stroke-width="1.100"/><path d="M523.2 213.9L526.7 210.10000000000002" stroke="#000" stroke-width="1.100"/><path d="M526.6 210.0a3.300 3.300 0 1 1 5.200 -4.300" fill="none" stroke="#000" stroke-width="1.100"/><path d="M540.5 205.0L545.0 209.3M536.2 210.5L540.5 214.8L544.8 210.5" fill="none" stroke="#fff" stroke-width="1.100"/><path d="M536.0 209.3L540.5 205.0M535.7 209.8H545.3" fill="none" stroke="#000" stroke-width="1.100"/><rect x="464" y="222" width="86" height="5" fill="#f0f0f0"/><path d="M469 223h5l-2.500 3z" fill="#000"/><path d="M541 223h5l-2.500 3z" fill="#000"/><path d="M478 224.5H539" stroke="#000" stroke-width="1" stroke-dasharray="1 1"/><rect x="464" y="226" width="86" height="1" fill="#9a9a9a"/><rect x="550" y="201" width="1" height="26" fill="#8c8c8c"/><rect x="553" y="201" width="67" height="19" fill="#004e92"/><path d="M593.8 214.5L597.2 210.60000000000002" stroke="#fff" stroke-width="1.200"/><circle cx="599.9" cy="208.70000000000002" r="3.300" fill="none" stroke="#fff" stroke-width="1.100"/><path d="M593.2 213.9L596.7 210.10000000000002" stroke="#000" stroke-width="1.100"/><path d="M596.6 210.0a3.300 3.300 0 1 1 5.200 -4.300" fill="none" stroke="#000" stroke-width="1.100"/><path d="M610.5 205.0L615.0 209.3M606.2 210.5L610.5 214.8L614.8 210.5" fill="none" stroke="#fff" stroke-width="1.100"/><path d="M606.0 209.3L610.5 205.0M605.7 209.8H615.3" fill="none" stroke="#000" stroke-width="1.100"/><rect x="553" y="222" width="67" height="5" fill="#f0f0f0"/><path d="M558 223h5l-2.500 3z" fill="#000"/><path d="M611 223h5l-2.500 3z" fill="#000"/><path d="M567 224.5H609" stroke="#000" stroke-width="1" stroke-dasharray="1 1"/><rect x="553" y="226" width="67" height="1" fill="#9a9a9a"/><rect x="620" y="201" width="1" height="26" fill="#8c8c8c"/><rect x="623" y="201" width="106" height="19" fill="#004e92"/><path d="M702.8 214.5L706.2 210.60000000000002" stroke="#fff" stroke-width="1.200"/><circle cx="708.9" cy="208.70000000000002" r="3.300" fill="none" stroke="#fff" stroke-width="1.100"/><path d="M702.2 213.9L705.7 210.10000000000002" stroke="#000" stroke-width="1.100"/><path d="M705.6 210.0a3.300 3.300 0 1 1 5.200 -4.300" fill="none" stroke="#000" stroke-width="1.100"/><path d="M715.3 213.60000000000002L719.5 205.3L723.7 213.60000000000002z" fill="none" stroke="#fff" stroke-width="1.200"/><path d="M714.9 213.9L719.3 205.3" stroke="#000" stroke-width="1.200"/><rect x="623" y="222" width="106" height="5" fill="#f0f0f0"/><path d="M628 223h5l-2.500 3z" fill="#000"/><path d="M720 223h5l-2.500 3z" fill="#000"/><path d="M637 224.5H718" stroke="#000" stroke-width="1" stroke-dasharray="1 1"/><rect x="623" y="226" width="106" height="1" fill="#9a9a9a"/><rect x="729" y="201" width="1" height="26" fill="#8c8c8c"/><rect x="732" y="201" width="111" height="19" fill="#004e92"/><path d="M816.8 214.5L820.2 210.60000000000002" stroke="#fff" stroke-width="1.200"/><circle cx="822.9" cy="208.70000000000002" r="3.300" fill="none" stroke="#fff" stroke-width="1.100"/><path d="M816.2 213.9L819.7 210.10000000000002" stroke="#000" stroke-width="1.100"/><path d="M819.6 210.0a3.300 3.300 0 1 1 5.200 -4.300" fill="none" stroke="#000" stroke-width="1.100"/><path d="M833.5 205.0L838.0 209.3M829.2 210.5L833.5 214.8L837.8 210.5" fill="none" stroke="#fff" stroke-width="1.100"/><path d="M829.0 209.3L833.5 205.0M828.7 209.8H838.3" fill="none" stroke="#000" stroke-width="1.100"/><rect x="732" y="222" width="111" height="5" fill="#f0f0f0"/><path d="M737 223h5l-2.500 3z" fill="#000"/><path d="M834 223h5l-2.500 3z" fill="#000"/><path d="M746 224.5H832" stroke="#000" stroke-width="1" stroke-dasharray="1 1"/><rect x="732" y="226" width="111" height="1" fill="#9a9a9a"/><rect x="843" y="201" width="1" height="26" fill="#8c8c8c"/><rect x="846" y="201" width="89" height="19" fill="#004e92"/><path d="M908.8 214.5L912.2 210.60000000000002" stroke="#fff" stroke-width="1.200"/><circle cx="914.9" cy="208.70000000000002" r="3.300" fill="none" stroke="#fff" stroke-width="1.100"/><path d="M908.2 213.9L911.7 210.10000000000002" stroke="#000" stroke-width="1.100"/><path d="M911.6 210.0a3.300 3.300 0 1 1 5.200 -4.300" fill="none" stroke="#000" stroke-width="1.100"/><path d="M925.5 205.0L930.0 209.3M921.2 210.5L925.5 214.8L929.8 210.5" fill="none" stroke="#fff" stroke-width="1.100"/><path d="M921.0 209.3L925.5 205.0M920.7 209.8H930.3" fill="none" stroke="#000" stroke-width="1.100"/><rect x="846" y="222" width="89" height="5" fill="#f0f0f0"/><path d="M851 223h5l-2.500 3z" fill="#000"/><path d="M926 223h5l-2.500 3z" fill="#000"/><path d="M860 224.5H924" stroke="#000" stroke-width="1" stroke-dasharray="1 1"/><rect x="846" y="226" width="89" height="1" fill="#9a9a9a"/><rect x="935" y="201" width="1" height="26" fill="#8c8c8c"/><rect x="938" y="201" width="117" height="19" fill="#004e92"/><path d="M1028.8 214.5L1032.2 210.60000000000002" stroke="#fff" stroke-width="1.200"/><circle cx="1034.9" cy="208.70000000000002" r="3.300" fill="none" stroke="#fff" stroke-width="1.100"/><path d="M1028.2 213.9L1031.7 210.10000000000002" stroke="#000" stroke-width="1.100"/><path d="M1031.6 210.0a3.300 3.300 0 1 1 5.200 -4.300" fill="none" stroke="#000" stroke-width="1.100"/><path d="M1045.5 205.0L1050.0 209.3M1041.2 210.5L1045.5 214.8L1049.8 210.5" fill="none" stroke="#fff" stroke-width="1.100"/><path d="M1041.0 209.3L1045.5 205.0M1040.7 209.8H1050.3" fill="none" stroke="#000" stroke-width="1.100"/><rect x="938" y="222" width="117" height="5" fill="#f0f0f0"/><path d="M943 223h5l-2.500 3z" fill="#000"/><path d="M1046 223h5l-2.500 3z" fill="#000"/><path d="M952 224.5H1044" stroke="#000" stroke-width="1" stroke-dasharray="1 1"/><rect x="938" y="226" width="117" height="1" fill="#9a9a9a"/><rect x="1055" y="201" width="1" height="26" fill="#8c8c8c"/><rect x="1058" y="201" width="81" height="19" fill="#004e92"/><path d="M1112.8 214.5L1116.2 210.60000000000002" stroke="#fff" stroke-width="1.200"/><circle cx="1118.9" cy="208.70000000000002" r="3.300" fill="none" stroke="#fff" stroke-width="1.100"/><path d="M1112.2 213.9L1115.7 210.10000000000002" stroke="#000" stroke-width="1.100"/><path d="M1115.6 210.0a3.300 3.300 0 1 1 5.200 -4.300" fill="none" stroke="#000" stroke-width="1.100"/><path d="M1129.5 205.0L1134.0 209.3M1125.2 210.5L1129.5 214.8L1133.8 210.5" fill="none" stroke="#fff" stroke-width="1.100"/><path d="M1125.0 209.3L1129.5 205.0M1124.7 209.8H1134.3" fill="none" stroke="#000" stroke-width="1.100"/><rect x="1058" y="222" width="81" height="5" fill="#f0f0f0"/><path d="M1063 223h5l-2.500 3z" fill="#000"/><path d="M1130 223h5l-2.500 3z" fill="#000"/><path d="M1072 224.5H1128" stroke="#000" stroke-width="1" stroke-dasharray="1 1"/><rect x="1058" y="226" width="81" height="1" fill="#9a9a9a"/><rect x="1139" y="201" width="1" height="26" fill="#8c8c8c"/><rect x="1142" y="201" width="116" height="19" fill="#004e92"/><rect x="1142" y="222" width="116" height="5" fill="#f0f0f0"/><path d="M1147 223h5l-2.500 3z" fill="#000"/><path d="M1156 224.5H1258" stroke="#000" stroke-width="1" stroke-dasharray="1 1"/><rect x="1142" y="226" width="116" height="1" fill="#9a9a9a"/><rect x="216" y="227" width="1042" height="1" fill="#000"/><rect x="216" y="200" width="1" height="28" fill="#000"/><rect x="300" y="200" width="1" height="28" fill="#000"/><rect x="462" y="200" width="1" height="28" fill="#000"/><rect x="551" y="200" width="1" height="28" fill="#000"/><rect x="621" y="200" width="1" height="28" fill="#000"/><rect x="730" y="200" width="1" height="28" fill="#000"/><rect x="844" y="200" width="1" height="28" fill="#000"/><rect x="936" y="200" width="1" height="28" fill="#000"/><rect x="1056" y="200" width="1" height="28" fill="#000"/><rect x="1140" y="200" width="1" height="28" fill="#000"/><rect x="152" y="227" width="64" height="1" fill="#000"/></svg>
<div class="t" style="left:220.4px;top:205px;font-size:11px;color:#fff;font-family:'DejaVu Sans Condensed','Liberation Sans',sans-serif;letter-spacing:-0.129px;">Cod.Quiz</div>
<div class="t" style="left:324.7px;top:205px;font-size:11px;color:#fff;font-family:'DejaVu Sans Condensed','Liberation Sans',sans-serif;letter-spacing:-0.442px;">Cognome e nome</div>
<div class="t" style="left:468.7px;top:205px;font-size:11px;color:#fff;font-family:'DejaVu Sans Condensed','Liberation Sans',sans-serif;letter-spacing:-0.243px;">QuizCasa</div>
<div class="t" style="left:553.9px;top:205px;font-size:11px;color:#fff;font-family:'DejaVu Sans Condensed','Liberation Sans',sans-serif;letter-spacing:-0.066px;">Medi...</div>
<div class="t" style="left:626.9px;top:205px;font-size:11px;color:#fff;font-family:'DejaVu Sans Condensed','Liberation Sans',sans-serif;letter-spacing:-0.266px;">Schede svolte</div>
<div class="t" style="left:735.2px;top:205px;font-size:11px;color:#fff;font-family:'DejaVu Sans Condensed','Liberation Sans',sans-serif;letter-spacing:-0.174px;">Schede da fare</div>
<div class="t" style="left:846.7px;top:205px;font-size:11px;color:#fff;font-family:'DejaVu Sans Condensed','Liberation Sans',sans-serif;letter-spacing:-0.119px;">Media qui...</div>
<div class="t" style="left:941.8px;top:205px;font-size:11px;color:#fff;font-family:'DejaVu Sans Condensed','Liberation Sans',sans-serif;letter-spacing:-0.336px;">Schede fac-simili</div>
<div class="t" style="left:1061.2px;top:205px;font-size:11px;color:#fff;font-family:'DejaVu Sans Condensed','Liberation Sans',sans-serif;letter-spacing:-0.358px;">Preesami</div>
<div class="a" style="left:1142px;top:201px;width:116px;height:19px;overflow:hidden">
<div class="t tah" style="left:29.799999999999955px;top:4px;font-size:11px;color:#fff;letter-spacing:.05px">Codice registr. Qu</div></div>
<div class="a" style="left:217px;top:228px;width:1041px;height:21px;background:#f8fcff;"></div>
<div class="a" style="left:217px;top:249px;width:1041px;height:21px;background:#dfeefd;"></div>
<div class="a" style="left:217px;top:270px;width:1041px;height:21px;background:#f8fcff;"></div>
<div class="a" style="left:217px;top:291px;width:1041px;height:21px;background:#dfeefd;"></div>
<div class="a" style="left:217px;top:312px;width:1041px;height:21px;background:#f8fcff;"></div>
<div class="a" style="left:217px;top:333px;width:1041px;height:21px;background:#dfeefd;"></div>
<div class="a" style="left:217px;top:354px;width:1041px;height:21px;background:#f8fcff;"></div>
<div class="a" style="left:217px;top:375px;width:1041px;height:21px;background:#dfeefd;"></div>
<div class="a" style="left:217px;top:396px;width:1041px;height:21px;background:#f8fcff;"></div>
<div class="a" style="left:217px;top:417px;width:1041px;height:21px;background:#dfeefd;"></div>
<div class="a" style="left:217px;top:438px;width:1041px;height:21px;background:#f8fcff;"></div>
<div class="a" style="left:217px;top:459px;width:1041px;height:21px;background:#dfeefd;"></div>
<div class="a" style="left:217px;top:480px;width:1041px;height:21px;background:#f8fcff;"></div>
<div class="a" style="left:299px;top:228px;width:3px;height:273px;background:rgba(255,255,255,.45);"></div>
<div class="a" style="left:461px;top:228px;width:3px;height:273px;background:rgba(255,255,255,.45);"></div>
<div class="a" style="left:550px;top:228px;width:3px;height:273px;background:rgba(255,255,255,.45);"></div>
<div class="a" style="left:620px;top:228px;width:3px;height:273px;background:rgba(255,255,255,.45);"></div>
<div class="a" style="left:729px;top:228px;width:3px;height:273px;background:rgba(255,255,255,.45);"></div>
<div class="a" style="left:843px;top:228px;width:3px;height:273px;background:rgba(255,255,255,.45);"></div>
<div class="a" style="left:935px;top:228px;width:3px;height:273px;background:rgba(255,255,255,.45);"></div>
<div class="a" style="left:1055px;top:228px;width:3px;height:273px;background:rgba(255,255,255,.45);"></div>
<div class="a" style="left:1139px;top:228px;width:3px;height:273px;background:rgba(255,255,255,.45);"></div>
<div class="a" style="left:152px;top:228px;width:64px;height:20px;background:#fff;"></div>
<div class="a" style="left:153px;top:229px;width:62px;height:18px;background:#0066cc;"></div>
<div class="a" style="left:215px;top:229px;width:1px;height:19px;background:#8c8c8c;"></div>
<div class="a" style="left:152px;top:247px;width:64px;height:1px;background:#8c8c8c;"></div>
<div class="a" style="left:152px;top:248px;width:64px;height:1px;background:#000;"></div>
<div class="t" style="left:152px;top:233px;font-size:11px;color:#fff;font-family:'DejaVu Sans Condensed','Liberation Sans',sans-serif;letter-spacing:0.3px;width:64px;text-align:center;">102</div>
<div class="t tah" style="left:179px;top:233px;width:120px;text-align:right;font-size:12px;color:#000;letter-spacing:.1px">102</div>
<div class="t" style="left:301.8px;top:233px;font-size:12px;color:#000;font-family:'DejaVu Sans Condensed','Liberation Sans',sans-serif;letter-spacing:0.106px;font-kerning:none;">DE MADDALENA FEDERICO</div>
<div class="t tah" style="left:500.5px;top:233px;width:120px;text-align:right;font-size:12px;color:#ff0000;letter-spacing:.1px">25,34</div>
<div class="t tah" style="left:609.5px;top:233px;width:120px;text-align:right;font-size:12px;color:#000;letter-spacing:.1px">14,5%</div>
<div class="t tah" style="left:723.5px;top:233px;width:120px;text-align:right;font-size:12px;color:#000;letter-spacing:.1px">153</div>
<div class="t tah" style="left:815.5px;top:233px;width:120px;text-align:right;font-size:12px;color:#000;letter-spacing:.1px">33,59</div>
<div class="t tah" style="left:935.5px;top:233px;width:120px;text-align:right;font-size:12px;color:#000;letter-spacing:.1px">122</div>
<div class="t tah" style="left:1019.5px;top:233px;width:120px;text-align:right;font-size:12px;color:#000;letter-spacing:.1px">0</div>
<div class="a" style="left:152px;top:249px;width:64px;height:20px;background:#fff;"></div>
<div class="a" style="left:153px;top:250px;width:62px;height:18px;background:#0066cc;"></div>
<div class="a" style="left:215px;top:250px;width:1px;height:19px;background:#8c8c8c;"></div>
<div class="a" style="left:152px;top:268px;width:64px;height:1px;background:#8c8c8c;"></div>
<div class="a" style="left:152px;top:269px;width:64px;height:1px;background:#000;"></div>
<div class="t" style="left:152px;top:254px;font-size:11px;color:#fff;font-family:'DejaVu Sans Condensed','Liberation Sans',sans-serif;letter-spacing:0.3px;width:64px;text-align:center;">103</div>
<div class="t tah" style="left:179px;top:254px;width:120px;text-align:right;font-size:12px;color:#000;letter-spacing:.1px">103</div>
<div class="t" style="left:301.8px;top:254px;font-size:12px;color:#000;font-family:'DejaVu Sans Condensed','Liberation Sans',sans-serif;letter-spacing:0.41px;font-kerning:none;">BASTIOLI ERIC</div>
<div class="t tah" style="left:500.5px;top:254px;width:120px;text-align:right;font-size:12px;color:#ff0000;letter-spacing:.1px">20,00</div>
<div class="t tah" style="left:609.5px;top:254px;width:120px;text-align:right;font-size:12px;color:#000;letter-spacing:.1px">3,2%</div>
<div class="t tah" style="left:723.5px;top:254px;width:120px;text-align:right;font-size:12px;color:#000;letter-spacing:.1px">173</div>
<div class="t tah" style="left:815.5px;top:254px;width:120px;text-align:right;font-size:12px;color:#000;letter-spacing:.1px">11,57</div>
<div class="t tah" style="left:935.5px;top:254px;width:120px;text-align:right;font-size:12px;color:#000;letter-spacing:.1px">1</div>
<div class="t tah" style="left:1019.5px;top:254px;width:120px;text-align:right;font-size:12px;color:#000;letter-spacing:.1px">0</div>
<div class="a" style="left:152px;top:270px;width:64px;height:20px;background:#fff;"></div>
<div class="a" style="left:153px;top:271px;width:62px;height:18px;background:#0066cc;"></div>
<div class="a" style="left:215px;top:271px;width:1px;height:19px;background:#8c8c8c;"></div>
<div class="a" style="left:152px;top:289px;width:64px;height:1px;background:#8c8c8c;"></div>
<div class="a" style="left:152px;top:290px;width:64px;height:1px;background:#000;"></div>
<div class="t" style="left:152px;top:275px;font-size:11px;color:#fff;font-family:'DejaVu Sans Condensed','Liberation Sans',sans-serif;letter-spacing:0.3px;width:64px;text-align:center;">2</div>
<div class="t tah" style="left:179px;top:275px;width:120px;text-align:right;font-size:12px;color:#000;letter-spacing:.1px">2</div>
<div class="t" style="left:301.8px;top:275px;font-size:12px;color:#000;font-family:'DejaVu Sans Condensed','Liberation Sans',sans-serif;letter-spacing:0.557px;font-kerning:none;">TEST RS</div>
<div class="t tah" style="left:500.5px;top:275px;width:120px;text-align:right;font-size:12px;color:#ff0000;letter-spacing:.1px">40,00</div>
<div class="t tah" style="left:609.5px;top:275px;width:120px;text-align:right;font-size:12px;color:#000;letter-spacing:.1px">0,8%</div>
<div class="t tah" style="left:723.5px;top:275px;width:120px;text-align:right;font-size:12px;color:#000;letter-spacing:.1px">177</div>
<div class="t tah" style="left:815.5px;top:275px;width:120px;text-align:right;font-size:12px;color:#000;letter-spacing:.1px">32,00</div>
<div class="t tah" style="left:935.5px;top:275px;width:120px;text-align:right;font-size:12px;color:#000;letter-spacing:.1px">0</div>
<div class="t tah" style="left:1019.5px;top:275px;width:120px;text-align:right;font-size:12px;color:#000;letter-spacing:.1px">0</div>
<div class="a" style="left:152px;top:291px;width:64px;height:20px;background:#fff;"></div>
<div class="a" style="left:153px;top:292px;width:62px;height:18px;background:#0066cc;"></div>
<div class="a" style="left:215px;top:292px;width:1px;height:19px;background:#8c8c8c;"></div>
<div class="a" style="left:152px;top:310px;width:64px;height:1px;background:#8c8c8c;"></div>
<div class="a" style="left:152px;top:311px;width:64px;height:1px;background:#000;"></div>
<div class="t" style="left:152px;top:296px;font-size:11px;color:#fff;font-family:'DejaVu Sans Condensed','Liberation Sans',sans-serif;letter-spacing:0.3px;width:64px;text-align:center;">104</div>
<div class="t tah" style="left:179px;top:296px;width:120px;text-align:right;font-size:12px;color:#000;letter-spacing:.1px">104</div>
<div class="a" style="left:300px;top:291px;width:162px;height:20px;background:#000;"></div>
<div class="t" style="left:301.8px;top:296px;font-size:12px;color:#fff;font-family:'DejaVu Sans Condensed','Liberation Sans',sans-serif;letter-spacing:-0.044px;font-kerning:none;">ROCCA FRANCESCO</div>
<div class="t tah" style="left:500.5px;top:296px;width:120px;text-align:right;font-size:12px;color:#ff0000;letter-spacing:.1px">40,00</div>
<div class="t tah" style="left:609.5px;top:296px;width:120px;text-align:right;font-size:12px;color:#000;letter-spacing:.1px">0,5%</div>
<div class="t tah" style="left:723.5px;top:296px;width:120px;text-align:right;font-size:12px;color:#000;letter-spacing:.1px">178</div>
<div class="t tah" style="left:815.5px;top:296px;width:120px;text-align:right;font-size:12px;color:#000;letter-spacing:.1px">27,59</div>
<div class="t tah" style="left:935.5px;top:296px;width:120px;text-align:right;font-size:12px;color:#000;letter-spacing:.1px">0</div>
<div class="t tah" style="left:1019.5px;top:296px;width:120px;text-align:right;font-size:12px;color:#000;letter-spacing:.1px">0</div>
<div class="a" style="left:152px;top:312px;width:64px;height:20px;background:#fff;"></div>
<div class="a" style="left:153px;top:313px;width:62px;height:18px;background:#0066cc;"></div>
<div class="a" style="left:215px;top:313px;width:1px;height:19px;background:#8c8c8c;"></div>
<div class="a" style="left:152px;top:331px;width:64px;height:1px;background:#8c8c8c;"></div>
<div class="a" style="left:152px;top:332px;width:64px;height:1px;background:#000;"></div>
<div class="t" style="left:152px;top:317px;font-size:11px;color:#fff;font-family:'DejaVu Sans Condensed','Liberation Sans',sans-serif;letter-spacing:0.3px;width:64px;text-align:center;">1</div>
<div class="t tah" style="left:179px;top:317px;width:120px;text-align:right;font-size:12px;color:#000;letter-spacing:.1px">1</div>
<div class="t" style="left:301.8px;top:317px;font-size:12px;color:#000;font-family:'DejaVu Sans Condensed','Liberation Sans',sans-serif;letter-spacing:0.474px;font-kerning:none;">BASSI PATRIZIA</div>
<div class="t tah" style="left:500.5px;top:317px;width:120px;text-align:right;font-size:12px;color:#ff0000;letter-spacing:.1px">40,00</div>
<div class="t tah" style="left:723.5px;top:317px;width:120px;text-align:right;font-size:12px;color:#000;letter-spacing:.1px">179</div>
<div class="t tah" style="left:815.5px;top:317px;width:120px;text-align:right;font-size:12px;color:#000;letter-spacing:.1px">0,00</div>
<div class="t tah" style="left:935.5px;top:317px;width:120px;text-align:right;font-size:12px;color:#000;letter-spacing:.1px">0</div>
<div class="t tah" style="left:1019.5px;top:317px;width:120px;text-align:right;font-size:12px;color:#000;letter-spacing:.1px">0</div>
<div class="a" style="left:152px;top:333px;width:64px;height:20px;background:#fff;"></div>
<div class="a" style="left:153px;top:334px;width:62px;height:18px;background:#0066cc;"></div>
<div class="a" style="left:215px;top:334px;width:1px;height:19px;background:#8c8c8c;"></div>
<div class="a" style="left:152px;top:352px;width:64px;height:1px;background:#8c8c8c;"></div>
<div class="a" style="left:152px;top:353px;width:64px;height:1px;background:#000;"></div>
<div class="t" style="left:152px;top:338px;font-size:11px;color:#fff;font-family:'DejaVu Sans Condensed','Liberation Sans',sans-serif;letter-spacing:0.3px;width:64px;text-align:center;">3</div>
<div class="t tah" style="left:179px;top:338px;width:120px;text-align:right;font-size:12px;color:#000;letter-spacing:.1px">3</div>
<div class="t" style="left:301.8px;top:338px;font-size:12px;color:#000;font-family:'DejaVu Sans Condensed','Liberation Sans',sans-serif;letter-spacing:0.441px;font-kerning:none;">FILIPPI FABIO</div>
<div class="t tah" style="left:500.5px;top:338px;width:120px;text-align:right;font-size:12px;color:#ff0000;letter-spacing:.1px">40,00</div>
<div class="t tah" style="left:723.5px;top:338px;width:120px;text-align:right;font-size:12px;color:#000;letter-spacing:.1px">179</div>
<div class="t tah" style="left:815.5px;top:338px;width:120px;text-align:right;font-size:12px;color:#000;letter-spacing:.1px">0,00</div>
<div class="t tah" style="left:935.5px;top:338px;width:120px;text-align:right;font-size:12px;color:#000;letter-spacing:.1px">0</div>
<div class="t tah" style="left:1019.5px;top:338px;width:120px;text-align:right;font-size:12px;color:#000;letter-spacing:.1px">0</div>
<div class="a" style="left:152px;top:354px;width:64px;height:20px;background:#fff;"></div>
<div class="a" style="left:153px;top:355px;width:62px;height:18px;background:#0066cc;"></div>
<div class="a" style="left:215px;top:355px;width:1px;height:19px;background:#8c8c8c;"></div>
<div class="a" style="left:152px;top:373px;width:64px;height:1px;background:#8c8c8c;"></div>
<div class="a" style="left:152px;top:374px;width:64px;height:1px;background:#000;"></div>
<div class="t" style="left:152px;top:359px;font-size:11px;color:#fff;font-family:'DejaVu Sans Condensed','Liberation Sans',sans-serif;letter-spacing:0.3px;width:64px;text-align:center;">4</div>
<div class="t tah" style="left:179px;top:359px;width:120px;text-align:right;font-size:12px;color:#000;letter-spacing:.1px">4</div>
<div class="t" style="left:301.8px;top:359px;font-size:12px;color:#000;font-family:'DejaVu Sans Condensed','Liberation Sans',sans-serif;letter-spacing:0.044px;font-kerning:none;">LOMBARDI RICCARDO</div>
<div class="t tah" style="left:500.5px;top:359px;width:120px;text-align:right;font-size:12px;color:#ff0000;letter-spacing:.1px">40,00</div>
<div class="t tah" style="left:723.5px;top:359px;width:120px;text-align:right;font-size:12px;color:#000;letter-spacing:.1px">179</div>
<div class="t tah" style="left:815.5px;top:359px;width:120px;text-align:right;font-size:12px;color:#000;letter-spacing:.1px">0,00</div>
<div class="t tah" style="left:935.5px;top:359px;width:120px;text-align:right;font-size:12px;color:#000;letter-spacing:.1px">0</div>
<div class="t tah" style="left:1019.5px;top:359px;width:120px;text-align:right;font-size:12px;color:#000;letter-spacing:.1px">0</div>
<div class="a" style="left:152px;top:375px;width:64px;height:20px;background:#fff;"></div>
<div class="a" style="left:153px;top:376px;width:62px;height:18px;background:#0066cc;"></div>
<div class="a" style="left:215px;top:376px;width:1px;height:19px;background:#8c8c8c;"></div>
<div class="a" style="left:152px;top:394px;width:64px;height:1px;background:#8c8c8c;"></div>
<div class="a" style="left:152px;top:395px;width:64px;height:1px;background:#000;"></div>
<div class="t" style="left:152px;top:380px;font-size:11px;color:#fff;font-family:'DejaVu Sans Condensed','Liberation Sans',sans-serif;letter-spacing:0.3px;width:64px;text-align:center;">5</div>
<div class="t tah" style="left:179px;top:380px;width:120px;text-align:right;font-size:12px;color:#000;letter-spacing:.1px">5</div>
<div class="t" style="left:301.8px;top:380px;font-size:12px;color:#000;font-family:'DejaVu Sans Condensed','Liberation Sans',sans-serif;letter-spacing:0.27px;font-kerning:none;">STAGNI LORENZO</div>
<div class="t tah" style="left:500.5px;top:380px;width:120px;text-align:right;font-size:12px;color:#ff0000;letter-spacing:.1px">40,00</div>
<div class="t tah" style="left:723.5px;top:380px;width:120px;text-align:right;font-size:12px;color:#000;letter-spacing:.1px">179</div>
<div class="t tah" style="left:815.5px;top:380px;width:120px;text-align:right;font-size:12px;color:#000;letter-spacing:.1px">0,00</div>
<div class="t tah" style="left:935.5px;top:380px;width:120px;text-align:right;font-size:12px;color:#000;letter-spacing:.1px">0</div>
<div class="t tah" style="left:1019.5px;top:380px;width:120px;text-align:right;font-size:12px;color:#000;letter-spacing:.1px">0</div>
<div class="a" style="left:152px;top:396px;width:64px;height:20px;background:#fff;"></div>
<div class="a" style="left:153px;top:397px;width:62px;height:18px;background:#0066cc;"></div>
<div class="a" style="left:215px;top:397px;width:1px;height:19px;background:#8c8c8c;"></div>
<div class="a" style="left:152px;top:415px;width:64px;height:1px;background:#8c8c8c;"></div>
<div class="a" style="left:152px;top:416px;width:64px;height:1px;background:#000;"></div>
<div class="t" style="left:152px;top:401px;font-size:11px;color:#fff;font-family:'DejaVu Sans Condensed','Liberation Sans',sans-serif;letter-spacing:0.3px;width:64px;text-align:center;">6</div>
<div class="t tah" style="left:179px;top:401px;width:120px;text-align:right;font-size:12px;color:#000;letter-spacing:.1px">6</div>
<div class="t" style="left:301.8px;top:401px;font-size:12px;color:#000;font-family:'DejaVu Sans Condensed','Liberation Sans',sans-serif;letter-spacing:0.221px;font-kerning:none;">MARCHESINI SIMONE</div>
<div class="t tah" style="left:500.5px;top:401px;width:120px;text-align:right;font-size:12px;color:#ff0000;letter-spacing:.1px">40,00</div>
<div class="t tah" style="left:723.5px;top:401px;width:120px;text-align:right;font-size:12px;color:#000;letter-spacing:.1px">179</div>
<div class="t tah" style="left:815.5px;top:401px;width:120px;text-align:right;font-size:12px;color:#000;letter-spacing:.1px">0,00</div>
<div class="t tah" style="left:935.5px;top:401px;width:120px;text-align:right;font-size:12px;color:#000;letter-spacing:.1px">0</div>
<div class="t tah" style="left:1019.5px;top:401px;width:120px;text-align:right;font-size:12px;color:#000;letter-spacing:.1px">0</div>
<div class="a" style="left:152px;top:417px;width:64px;height:20px;background:#fff;"></div>
<div class="a" style="left:153px;top:418px;width:62px;height:18px;background:#0066cc;"></div>
<div class="a" style="left:215px;top:418px;width:1px;height:19px;background:#8c8c8c;"></div>
<div class="a" style="left:152px;top:436px;width:64px;height:1px;background:#8c8c8c;"></div>
<div class="a" style="left:152px;top:437px;width:64px;height:1px;background:#000;"></div>
<div class="t" style="left:152px;top:422px;font-size:11px;color:#fff;font-family:'DejaVu Sans Condensed','Liberation Sans',sans-serif;letter-spacing:0.3px;width:64px;text-align:center;">8</div>
<div class="t tah" style="left:179px;top:422px;width:120px;text-align:right;font-size:12px;color:#000;letter-spacing:.1px">8</div>
<div class="t" style="left:301.8px;top:422px;font-size:12px;color:#000;font-family:'DejaVu Sans Condensed','Liberation Sans',sans-serif;letter-spacing:0.168px;font-kerning:none;">ARNONE VINCENZO</div>
<div class="t tah" style="left:500.5px;top:422px;width:120px;text-align:right;font-size:12px;color:#ff0000;letter-spacing:.1px">40,00</div>
<div class="t tah" style="left:723.5px;top:422px;width:120px;text-align:right;font-size:12px;color:#000;letter-spacing:.1px">179</div>
<div class="t tah" style="left:815.5px;top:422px;width:120px;text-align:right;font-size:12px;color:#000;letter-spacing:.1px">0,00</div>
<div class="t tah" style="left:935.5px;top:422px;width:120px;text-align:right;font-size:12px;color:#000;letter-spacing:.1px">0</div>
<div class="t tah" style="left:1019.5px;top:422px;width:120px;text-align:right;font-size:12px;color:#000;letter-spacing:.1px">0</div>
<div class="a" style="left:152px;top:438px;width:64px;height:20px;background:#fff;"></div>
<div class="a" style="left:153px;top:439px;width:62px;height:18px;background:#0066cc;"></div>
<div class="a" style="left:215px;top:439px;width:1px;height:19px;background:#8c8c8c;"></div>
<div class="a" style="left:152px;top:457px;width:64px;height:1px;background:#8c8c8c;"></div>
<div class="a" style="left:152px;top:458px;width:64px;height:1px;background:#000;"></div>
<div class="t" style="left:152px;top:443px;font-size:11px;color:#fff;font-family:'DejaVu Sans Condensed','Liberation Sans',sans-serif;letter-spacing:0.3px;width:64px;text-align:center;">9</div>
<div class="t tah" style="left:179px;top:443px;width:120px;text-align:right;font-size:12px;color:#000;letter-spacing:.1px">9</div>
<div class="t" style="left:301.8px;top:443px;font-size:12px;color:#000;font-family:'DejaVu Sans Condensed','Liberation Sans',sans-serif;letter-spacing:0.139px;font-kerning:none;">CICCIO FUNGO</div>
<div class="t tah" style="left:500.5px;top:443px;width:120px;text-align:right;font-size:12px;color:#ff0000;letter-spacing:.1px">40,00</div>
<div class="t tah" style="left:723.5px;top:443px;width:120px;text-align:right;font-size:12px;color:#000;letter-spacing:.1px">179</div>
<div class="t tah" style="left:815.5px;top:443px;width:120px;text-align:right;font-size:12px;color:#000;letter-spacing:.1px">0,00</div>
<div class="t tah" style="left:935.5px;top:443px;width:120px;text-align:right;font-size:12px;color:#000;letter-spacing:.1px">0</div>
<div class="t tah" style="left:1019.5px;top:443px;width:120px;text-align:right;font-size:12px;color:#000;letter-spacing:.1px">0</div>
<div class="a" style="left:152px;top:459px;width:64px;height:20px;background:#fff;"></div>
<div class="a" style="left:153px;top:460px;width:62px;height:18px;background:#0066cc;"></div>
<div class="a" style="left:215px;top:460px;width:1px;height:19px;background:#8c8c8c;"></div>
<div class="a" style="left:152px;top:478px;width:64px;height:1px;background:#8c8c8c;"></div>
<div class="a" style="left:152px;top:479px;width:64px;height:1px;background:#000;"></div>
<div class="t" style="left:152px;top:464px;font-size:11px;color:#fff;font-family:'DejaVu Sans Condensed','Liberation Sans',sans-serif;letter-spacing:0.3px;width:64px;text-align:center;">21</div>
<div class="t tah" style="left:179px;top:464px;width:120px;text-align:right;font-size:12px;color:#000;letter-spacing:.1px">21</div>
<div class="t" style="left:301.8px;top:464px;font-size:12px;color:#000;font-family:'DejaVu Sans Condensed','Liberation Sans',sans-serif;letter-spacing:0.1px;font-kerning:none;">ACCESSORIO FRANCESCA</div>
<div class="t tah" style="left:500.5px;top:464px;width:120px;text-align:right;font-size:12px;color:#ff0000;letter-spacing:.1px">40,00</div>
<div class="t tah" style="left:723.5px;top:464px;width:120px;text-align:right;font-size:12px;color:#000;letter-spacing:.1px">179</div>
<div class="t tah" style="left:815.5px;top:464px;width:120px;text-align:right;font-size:12px;color:#000;letter-spacing:.1px">0,00</div>
<div class="t tah" style="left:935.5px;top:464px;width:120px;text-align:right;font-size:12px;color:#000;letter-spacing:.1px">0</div>
<div class="t tah" style="left:1019.5px;top:464px;width:120px;text-align:right;font-size:12px;color:#000;letter-spacing:.1px">0</div>
<div class="a" style="left:152px;top:480px;width:64px;height:20px;background:#fff;"></div>
<div class="a" style="left:153px;top:481px;width:62px;height:18px;background:#0066cc;"></div>
<div class="a" style="left:215px;top:481px;width:1px;height:19px;background:#8c8c8c;"></div>
<div class="a" style="left:152px;top:499px;width:64px;height:1px;background:#8c8c8c;"></div>
<div class="a" style="left:152px;top:500px;width:64px;height:1px;background:#000;"></div>
<div class="t" style="left:152px;top:485px;font-size:11px;color:#fff;font-family:'DejaVu Sans Condensed','Liberation Sans',sans-serif;letter-spacing:0.3px;width:64px;text-align:center;">22</div>
<div class="t tah" style="left:179px;top:485px;width:120px;text-align:right;font-size:12px;color:#000;letter-spacing:.1px">22</div>
<div class="t" style="left:301.8px;top:485px;font-size:12px;color:#000;font-family:'DejaVu Sans Condensed','Liberation Sans',sans-serif;letter-spacing:0.155px;font-kerning:none;">MARCHI ELENA</div>
<div class="t tah" style="left:500.5px;top:485px;width:120px;text-align:right;font-size:12px;color:#ff0000;letter-spacing:.1px">40,00</div>
<div class="t tah" style="left:723.5px;top:485px;width:120px;text-align:right;font-size:12px;color:#000;letter-spacing:.1px">179</div>
<div class="t tah" style="left:815.5px;top:485px;width:120px;text-align:right;font-size:12px;color:#000;letter-spacing:.1px">0,00</div>
<div class="t tah" style="left:935.5px;top:485px;width:120px;text-align:right;font-size:12px;color:#000;letter-spacing:.1px">0</div>
<div class="t tah" style="left:1019.5px;top:485px;width:120px;text-align:right;font-size:12px;color:#000;letter-spacing:.1px">0</div>
<div class="a" style="left:216px;top:228px;width:1px;height:273px;background:#000;"></div>
<div class="a" style="left:300px;top:228px;width:1px;height:273px;background:#000;"></div>
<div class="a" style="left:462px;top:228px;width:1px;height:273px;background:#000;"></div>
<div class="a" style="left:551px;top:228px;width:1px;height:273px;background:#000;"></div>
<div class="a" style="left:621px;top:228px;width:1px;height:273px;background:#ff0000;"></div>
<div class="a" style="left:730px;top:228px;width:1px;height:273px;background:#000;"></div>
<div class="a" style="left:844px;top:228px;width:1px;height:273px;background:#000;"></div>
<div class="a" style="left:936px;top:228px;width:1px;height:273px;background:#000;"></div>
<div class="a" style="left:1056px;top:228px;width:1px;height:273px;background:#000;"></div>
<div class="a" style="left:1140px;top:228px;width:1px;height:273px;background:#000;"></div>
<div class="a" style="left:152px;top:771px;width:1106px;height:17px;background:#f0f0f0;"></div>
<div class="a" style="left:169px;top:772px;width:17px;height:15px;background:#cdcdcd;"></div>
<svg style="left:152px;top:771px" width="1106" height="17" viewBox="0 0 1106 17"><path d="M10.500 5.300l-4.700 3.700 4.700 3.700" fill="none" stroke="#505050" stroke-width="2"/><path d="M1095.800 5.300l4.700 3.700-4.700 3.700" fill="none" stroke="#505050" stroke-width="2"/></svg>
<div class="a" style="left:142px;top:793px;width:1126px;height:185px;background:#fff;"></div>
<div class="a" style="left:146px;top:793px;width:1118px;height:4px;background:#f0f0f0;"></div>
<div class="a" style="left:146px;top:797px;width:1117px;height:156px;background:#f4f1ec;border:1px solid #9a9a9a;box-shadow:inset 1px 1px 0 #fff,inset -1px -1px 0 #fff;"></div>
<div class="a" style="left:146px;top:798px;width:1117px;height:1px;background:#a9a9a9;"></div>
<svg style="left:0;top:795px" width="1270" height="85" viewBox="0 795 1270 85"><rect x="148" y="799" width="1050" height="25" fill="#fff"/><rect x="148" y="801" width="65" height="21" fill="#000"/><rect x="148" y="822" width="65" height="1" fill="#8c8c8c"/><rect x="215" y="801" width="169" height="15" fill="#a9bfd4"/><rect x="215" y="818" width="169" height="5" fill="#f0f0f0"/><path d="M220 819h5l-2.500 3z" fill="#000"/><path d="M375 819h5l-2.500 3z" fill="#000"/><path d="M229 820.5H373" stroke="#000" stroke-width="1" stroke-dasharray="1 1"/><rect x="387" y="801" width="70" height="15" fill="#a9bfd4"/><rect x="387" y="818" width="70" height="5" fill="#f0f0f0"/><path d="M392 819h5l-2.500 3z" fill="#000"/><path d="M448 819h5l-2.500 3z" fill="#000"/><path d="M401 820.5H446" stroke="#000" stroke-width="1" stroke-dasharray="1 1"/><rect x="460" y="801" width="55" height="15" fill="#a9bfd4"/><rect x="460" y="818" width="55" height="5" fill="#f0f0f0"/><path d="M465 819h5l-2.500 3z" fill="#000"/><path d="M506 819h5l-2.500 3z" fill="#000"/><path d="M474 820.5H504" stroke="#000" stroke-width="1" stroke-dasharray="1 1"/><rect x="518" y="801" width="73" height="15" fill="#a9bfd4"/><rect x="518" y="818" width="73" height="5" fill="#f0f0f0"/><path d="M523 819h5l-2.500 3z" fill="#000"/><path d="M582 819h5l-2.500 3z" fill="#000"/><path d="M532 820.5H580" stroke="#000" stroke-width="1" stroke-dasharray="1 1"/><rect x="594" y="801" width="69" height="15" fill="#a9bfd4"/><rect x="594" y="818" width="69" height="5" fill="#f0f0f0"/><path d="M599 819h5l-2.500 3z" fill="#000"/><path d="M654 819h5l-2.500 3z" fill="#000"/><path d="M608 820.5H652" stroke="#000" stroke-width="1" stroke-dasharray="1 1"/><rect x="666" y="801" width="88" height="15" fill="#a9bfd4"/><rect x="666" y="818" width="88" height="5" fill="#f0f0f0"/><path d="M671 819h5l-2.500 3z" fill="#000"/><path d="M745 819h5l-2.500 3z" fill="#000"/><path d="M680 820.5H743" stroke="#000" stroke-width="1" stroke-dasharray="1 1"/><rect x="757" y="801" width="62" height="15" fill="#a9bfd4"/><rect x="757" y="818" width="62" height="5" fill="#f0f0f0"/><path d="M762 819h5l-2.500 3z" fill="#000"/><path d="M810 819h5l-2.500 3z" fill="#000"/><path d="M771 820.5H808" stroke="#000" stroke-width="1" stroke-dasharray="1 1"/><rect x="822" y="801" width="119" height="15" fill="#a9bfd4"/><rect x="822" y="818" width="119" height="5" fill="#f0f0f0"/><path d="M827 819h5l-2.500 3z" fill="#000"/><path d="M932 819h5l-2.500 3z" fill="#000"/><path d="M836 820.5H930" stroke="#000" stroke-width="1" stroke-dasharray="1 1"/><rect x="944" y="801" width="115" height="15" fill="#a9bfd4"/><rect x="944" y="818" width="115" height="5" fill="#f0f0f0"/><path d="M949 819h5l-2.500 3z" fill="#000"/><path d="M1050 819h5l-2.500 3z" fill="#000"/><path d="M958 820.5H1048" stroke="#000" stroke-width="1" stroke-dasharray="1 1"/><rect x="1062" y="801" width="69" height="15" fill="#a9bfd4"/><rect x="1062" y="818" width="69" height="5" fill="#f0f0f0"/><path d="M1067 819h5l-2.500 3z" fill="#000"/><path d="M1122 819h5l-2.500 3z" fill="#000"/><path d="M1076 820.5H1120" stroke="#000" stroke-width="1" stroke-dasharray="1 1"/><rect x="1134" y="801" width="62" height="15" fill="#a9bfd4"/><rect x="1134" y="818" width="62" height="5" fill="#f0f0f0"/><path d="M1139 819h5l-2.500 3z" fill="#000"/><path d="M1187 819h5l-2.500 3z" fill="#000"/><path d="M1148 820.5H1185" stroke="#000" stroke-width="1" stroke-dasharray="1 1"/><rect x="148" y="823" width="1050" height="1" fill="#000"/><rect x="213" y="800" width="1" height="75" fill="#000"/><rect x="385" y="800" width="1" height="75" fill="#000"/><rect x="458" y="800" width="1" height="75" fill="#000"/><rect x="516" y="800" width="1" height="75" fill="#000"/><rect x="592" y="800" width="1" height="75" fill="#000"/><rect x="664" y="800" width="1" height="75" fill="#000"/><rect x="755" y="800" width="1" height="75" fill="#000"/><rect x="820" y="800" width="1" height="75" fill="#000"/><rect x="942" y="800" width="1" height="75" fill="#000"/><rect x="1060" y="800" width="1" height="75" fill="#000"/><rect x="1132" y="800" width="1" height="75" fill="#000"/><rect x="1197" y="800" width="1" height="75" fill="#000"/></svg>
<svg style="left:0;top:795px" width="1270" height="30" viewBox="0 795 1270 30"><g transform="translate(0 598.800)"><path d="M357.8 214.5L361.2 210.60000000000002" stroke="#fff" stroke-width="1.200"/><circle cx="363.9" cy="208.70000000000002" r="3.300" fill="none" stroke="#fff" stroke-width="1.100"/><path d="M357.2 213.9L360.7 210.10000000000002" stroke="#000" stroke-width="1.100"/><path d="M360.6 210.0a3.300 3.300 0 1 1 5.200 -4.300" fill="none" stroke="#000" stroke-width="1.100"/><path d="M374.5 205.0L379.0 209.3M370.2 210.5L374.5 214.8L378.8 210.5" fill="none" stroke="#fff" stroke-width="1.100"/><path d="M370.0 209.3L374.5 205.0M369.7 209.8H379.3" fill="none" stroke="#000" stroke-width="1.100"/><path d="M430.8 214.5L434.2 210.60000000000002" stroke="#fff" stroke-width="1.200"/><circle cx="436.9" cy="208.70000000000002" r="3.300" fill="none" stroke="#fff" stroke-width="1.100"/><path d="M430.2 213.9L433.7 210.10000000000002" stroke="#000" stroke-width="1.100"/><path d="M433.6 210.0a3.300 3.300 0 1 1 5.200 -4.300" fill="none" stroke="#000" stroke-width="1.100"/><path d="M443.3 213.60000000000002L447.5 205.3L451.7 213.60000000000002z" fill="none" stroke="#fff" stroke-width="1.200"/><path d="M442.9 213.9L447.3 205.3" stroke="#000" stroke-width="1.200"/><path d="M488.8 214.5L492.2 210.60000000000002" stroke="#fff" stroke-width="1.200"/><circle cx="494.9" cy="208.70000000000002" r="3.300" fill="none" stroke="#fff" stroke-width="1.100"/><path d="M488.2 213.9L491.7 210.10000000000002" stroke="#000" stroke-width="1.100"/><path d="M491.6 210.0a3.300 3.300 0 1 1 5.200 -4.300" fill="none" stroke="#000" stroke-width="1.100"/><path d="M505.5 205.0L510.0 209.3M501.2 210.5L505.5 214.8L509.8 210.5" fill="none" stroke="#fff" stroke-width="1.100"/><path d="M501.0 209.3L505.5 205.0M500.7 209.8H510.3" fill="none" stroke="#000" stroke-width="1.100"/><path d="M564.8 214.5L568.2 210.60000000000002" stroke="#fff" stroke-width="1.200"/><circle cx="570.9" cy="208.70000000000002" r="3.300" fill="none" stroke="#fff" stroke-width="1.100"/><path d="M564.2 213.9L567.7 210.10000000000002" stroke="#000" stroke-width="1.100"/><path d="M567.6 210.0a3.300 3.300 0 1 1 5.200 -4.300" fill="none" stroke="#000" stroke-width="1.100"/><path d="M581.5 205.0L586.0 209.3M577.2 210.5L581.5 214.8L585.8 210.5" fill="none" stroke="#fff" stroke-width="1.100"/><path d="M577.0 209.3L581.5 205.0M576.7 209.8H586.3" fill="none" stroke="#000" stroke-width="1.100"/><path d="M636.8 214.5L640.2 210.60000000000002" stroke="#fff" stroke-width="1.200"/><circle cx="642.9" cy="208.70000000000002" r="3.300" fill="none" stroke="#fff" stroke-width="1.100"/><path d="M636.2 213.9L639.7 210.10000000000002" stroke="#000" stroke-width="1.100"/><path d="M639.6 210.0a3.300 3.300 0 1 1 5.200 -4.300" fill="none" stroke="#000" stroke-width="1.100"/><path d="M653.5 205.0L658.0 209.3M649.2 210.5L653.5 214.8L657.8 210.5" fill="none" stroke="#fff" stroke-width="1.100"/><path d="M649.0 209.3L653.5 205.0M648.7 209.8H658.3" fill="none" stroke="#000" stroke-width="1.100"/><path d="M727.8 214.5L731.2 210.60000000000002" stroke="#fff" stroke-width="1.200"/><circle cx="733.9" cy="208.70000000000002" r="3.300" fill="none" stroke="#fff" stroke-width="1.100"/><path d="M727.2 213.9L730.7 210.10000000000002" stroke="#000" stroke-width="1.100"/><path d="M730.6 210.0a3.300 3.300 0 1 1 5.200 -4.300" fill="none" stroke="#000" stroke-width="1.100"/><path d="M744.5 205.0L749.0 209.3M740.2 210.5L744.5 214.8L748.8 210.5" fill="none" stroke="#fff" stroke-width="1.100"/><path d="M740.0 209.3L744.5 205.0M739.7 209.8H749.3" fill="none" stroke="#000" stroke-width="1.100"/><path d="M792.8 214.5L796.2 210.60000000000002" stroke="#fff" stroke-width="1.200"/><circle cx="798.9" cy="208.70000000000002" r="3.300" fill="none" stroke="#fff" stroke-width="1.100"/><path d="M792.2 213.9L795.7 210.10000000000002" stroke="#000" stroke-width="1.100"/><path d="M795.6 210.0a3.300 3.300 0 1 1 5.200 -4.300" fill="none" stroke="#000" stroke-width="1.100"/><path d="M809.5 205.0L814.0 209.3M805.2 210.5L809.5 214.8L813.8 210.5" fill="none" stroke="#fff" stroke-width="1.100"/><path d="M805.0 209.3L809.5 205.0M804.7 209.8H814.3" fill="none" stroke="#000" stroke-width="1.100"/><path d="M914.8 214.5L918.2 210.60000000000002" stroke="#fff" stroke-width="1.200"/><circle cx="920.9" cy="208.70000000000002" r="3.300" fill="none" stroke="#fff" stroke-width="1.100"/><path d="M914.2 213.9L917.7 210.10000000000002" stroke="#000" stroke-width="1.100"/><path d="M917.6 210.0a3.300 3.300 0 1 1 5.200 -4.300" fill="none" stroke="#000" stroke-width="1.100"/><path d="M931.5 205.0L936.0 209.3M927.2 210.5L931.5 214.8L935.8 210.5" fill="none" stroke="#fff" stroke-width="1.100"/><path d="M927.0 209.3L931.5 205.0M926.7 209.8H936.3" fill="none" stroke="#000" stroke-width="1.100"/><path d="M1032.8 214.5L1036.2 210.60000000000002" stroke="#fff" stroke-width="1.200"/><circle cx="1038.9" cy="208.70000000000002" r="3.300" fill="none" stroke="#fff" stroke-width="1.100"/><path d="M1032.2 213.9L1035.7 210.10000000000002" stroke="#000" stroke-width="1.100"/><path d="M1035.6 210.0a3.300 3.300 0 1 1 5.200 -4.300" fill="none" stroke="#000" stroke-width="1.100"/><path d="M1049.5 205.0L1054.0 209.3M1045.2 210.5L1049.5 214.8L1053.8 210.5" fill="none" stroke="#fff" stroke-width="1.100"/><path d="M1045.0 209.3L1049.5 205.0M1044.7 209.8H1054.3" fill="none" stroke="#000" stroke-width="1.100"/><path d="M1104.8 214.5L1108.2 210.60000000000002" stroke="#fff" stroke-width="1.200"/><circle cx="1110.9" cy="208.70000000000002" r="3.300" fill="none" stroke="#fff" stroke-width="1.100"/><path d="M1104.2 213.9L1107.7 210.10000000000002" stroke="#000" stroke-width="1.100"/><path d="M1107.6 210.0a3.300 3.300 0 1 1 5.200 -4.300" fill="none" stroke="#000" stroke-width="1.100"/><path d="M1121.5 205.0L1126.0 209.3M1117.2 210.5L1121.5 214.8L1125.8 210.5" fill="none" stroke="#fff" stroke-width="1.100"/><path d="M1117.0 209.3L1121.5 205.0M1116.7 209.8H1126.3" fill="none" stroke="#000" stroke-width="1.100"/><path d="M1169.8 214.5L1173.2 210.60000000000002" stroke="#fff" stroke-width="1.200"/><circle cx="1175.9" cy="208.70000000000002" r="3.300" fill="none" stroke="#fff" stroke-width="1.100"/><path d="M1169.2 213.9L1172.7 210.10000000000002" stroke="#000" stroke-width="1.100"/><path d="M1172.6 210.0a3.300 3.300 0 1 1 5.200 -4.300" fill="none" stroke="#000" stroke-width="1.100"/><path d="M1186.5 205.0L1191.0 209.3M1182.2 210.5L1186.5 214.8L1190.8 210.5" fill="none" stroke="#fff" stroke-width="1.100"/><path d="M1182.0 209.3L1186.5 205.0M1181.7 209.8H1191.3" fill="none" stroke="#000" stroke-width="1.100"/></g></svg>
<div class="t" style="left:148px;top:807px;font-size:11px;color:#f2f200;font-family:'DejaVu Sans Condensed','Liberation Sans',sans-serif;width:65px;text-align:center;">3</div>
<div class="t" style="left:265.5px;top:803px;font-size:11px;color:#000;font-family:'DejaVu Sans Condensed','Liberation Sans',sans-serif;letter-spacing:-0.086px;">Origine</div>
<div class="t" style="left:394.6px;top:803px;font-size:11px;color:#000;font-family:'DejaVu Sans Condensed','Liberation Sans',sans-serif;letter-spacing:-0.547px;">Data</div>
<div class="t" style="left:462.2px;top:803px;font-size:11px;color:#000;font-family:'DejaVu Sans Condensed','Liberation Sans',sans-serif;letter-spacing:-0.461px;">Ora</div>
<div class="t" style="left:528.8px;top:803px;font-size:11px;color:#000;font-family:'DejaVu Sans Condensed','Liberation Sans',sans-serif;letter-spacing:-0.466px;">Tipo</div>
<div class="t" style="left:597.8px;top:803px;font-size:11px;color:#000;font-family:'DejaVu Sans Condensed','Liberation Sans',sans-serif;letter-spacing:0.097px;">Totale</div>
<div class="t" style="left:667.7px;top:803px;font-size:11px;color:#000;font-family:'DejaVu Sans Condensed','Liberation Sans',sans-serif;letter-spacing:-0.272px;">Quiz saltati</div>
<div class="t" style="left:759.1px;top:803px;font-size:11px;color:#000;font-family:'DejaVu Sans Condensed','Liberation Sans',sans-serif;letter-spacing:-0.246px;">Errori</div>
<div class="t" style="left:825.3px;top:803px;font-size:11px;color:#000;font-family:'DejaVu Sans Condensed','Liberation Sans',sans-serif;letter-spacing:-0.335px;">Tempo impiegato</div>
<div class="t" style="left:947.7px;top:803px;font-size:11px;color:#000;font-family:'DejaVu Sans Condensed','Liberation Sans',sans-serif;letter-spacing:-0.347px;">Gruppo/Numero</div>
<div class="t" style="left:1067.7px;top:803px;font-size:11px;color:#000;font-family:'DejaVu Sans Condensed','Liberation Sans',sans-serif;letter-spacing:-0.381px;">Titolo</div>
<div class="t" style="left:1134.3px;top:803px;font-size:11px;color:#000;font-family:'DejaVu Sans Condensed','Liberation Sans',sans-serif;letter-spacing:-0.255px;">Svolto</div>
<div class="a" style="left:214px;top:824px;width:984px;height:17px;background:#f0f2f5;"></div>
<div class="a" style="left:148px;top:824px;width:65px;height:17px;background:#f4f1ec;border-bottom:1px solid #000;border-top:1px solid #fff;"></div>
<div class="a" style="left:148px;top:839px;width:65px;height:1px;background:#8c8c8c;"></div>
<div class="t" style="left:148px;top:827px;font-size:11px;color:#000;font-family:'DejaVu Sans Condensed','Liberation Sans',sans-serif;letter-spacing:-0.3px;width:65px;text-align:center;">1239</div>
<div class="t" style="left:215.7px;top:827px;font-size:12px;color:#000;font-family:'DejaVu Sans Condensed','Liberation Sans',sans-serif;letter-spacing:-0.216px;">QuizApp, QuizCasa</div>
<div class="t" style="left:387.6px;top:827px;font-size:12px;color:#000;font-family:'DejaVu Sans Condensed','Liberation Sans',sans-serif;letter-spacing:0.242px;">03/04/2020</div>
<div class="t" style="left:460.8px;top:827px;font-size:12px;color:#000;font-family:'DejaVu Sans Condensed','Liberation Sans',sans-serif;letter-spacing:-0.227px;">11:46</div>
<div class="t" style="left:518.7px;top:827px;font-size:12px;color:#000;font-family:'DejaVu Sans Condensed','Liberation Sans',sans-serif;letter-spacing:0.067px;">Quiz per ar...</div>
<div class="t tah" style="left:542.5px;top:827px;width:120px;text-align:right;font-size:12px;color:#000;letter-spacing:.1px">40</div>
<div class="t tah" style="left:634px;top:827px;width:120px;text-align:right;font-size:12px;color:#000;letter-spacing:.1px">0</div>
<div class="t tah" style="left:699px;top:827px;width:120px;text-align:right;font-size:12px;color:#000;letter-spacing:.1px">21</div>
<div class="t tah" style="left:821px;top:827px;width:120px;text-align:right;font-size:12px;color:#000;letter-spacing:.1px">49</div>
<div class="t tah" style="left:944.6px;top:827px;font-size:12px;color:#000;letter-spacing:.1px">A*9</div>
<div class="t" style="left:1062.8px;top:827px;font-size:12px;color:#000;font-family:'DejaVu Sans Condensed','Liberation Sans',sans-serif;letter-spacing:0.19px;">2. SEGNA...</div>
<div class="t" style="left:1134.3px;top:827px;font-size:12px;color:#000;font-family:'DejaVu Sans Condensed','Liberation Sans',sans-serif;letter-spacing:-0.131px;">Quiz svol...</div>
<div class="a" style="left:214px;top:841px;width:984px;height:17px;background:#dde8f6;"></div>
<div class="a" style="left:148px;top:841px;width:65px;height:17px;background:#f4f1ec;border-bottom:1px solid #000;border-top:1px solid #fff;"></div>
<div class="a" style="left:148px;top:856px;width:65px;height:1px;background:#8c8c8c;"></div>
<div class="t" style="left:148px;top:844px;font-size:11px;color:#000;font-family:'DejaVu Sans Condensed','Liberation Sans',sans-serif;letter-spacing:-0.3px;width:65px;text-align:center;">1238</div>
<div class="a" style="left:214px;top:841px;width:171px;height:17px;background:#000;outline:1px dotted #fff;outline-offset:-1px;"></div>
<div class="t" style="left:215.7px;top:844px;font-size:12px;color:#fff;font-family:'DejaVu Sans Condensed','Liberation Sans',sans-serif;letter-spacing:-0.216px;">QuizApp, QuizCasa</div>
<div class="t" style="left:387.6px;top:844px;font-size:12px;color:#000;font-family:'DejaVu Sans Condensed','Liberation Sans',sans-serif;letter-spacing:0.242px;">13/12/2019</div>
<div class="t" style="left:460.8px;top:844px;font-size:12px;color:#000;font-family:'DejaVu Sans Condensed','Liberation Sans',sans-serif;letter-spacing:-0.227px;">11:28</div>
<div class="t" style="left:518.7px;top:844px;font-size:12px;color:#000;font-family:'DejaVu Sans Condensed','Liberation Sans',sans-serif;letter-spacing:0.067px;">Quiz per ar...</div>
<div class="t tah" style="left:542.5px;top:844px;width:120px;text-align:right;font-size:12px;color:#000;letter-spacing:.1px">40</div>
<div class="t tah" style="left:634px;top:844px;width:120px;text-align:right;font-size:12px;color:#000;letter-spacing:.1px">0</div>
<div class="t tah" style="left:699px;top:844px;width:120px;text-align:right;font-size:12px;color:#000;letter-spacing:.1px">24</div>
<div class="t tah" style="left:821px;top:844px;width:120px;text-align:right;font-size:12px;color:#000;letter-spacing:.1px">34</div>
<div class="t tah" style="left:944.6px;top:844px;font-size:12px;color:#000;letter-spacing:.1px">A*1</div>
<div class="t" style="left:1062.8px;top:844px;font-size:12px;color:#000;font-family:'DejaVu Sans Condensed','Liberation Sans',sans-serif;letter-spacing:0.295px;">1. VEICOL...</div>
<div class="t" style="left:1134.3px;top:844px;font-size:12px;color:#000;font-family:'DejaVu Sans Condensed','Liberation Sans',sans-serif;letter-spacing:-0.131px;">Quiz svol...</div>
<div class="a" style="left:214px;top:858px;width:984px;height:17px;background:#f0f2f5;"></div>
<div class="a" style="left:148px;top:858px;width:65px;height:17px;background:#f4f1ec;border-bottom:1px solid #000;border-top:1px solid #fff;"></div>
<div class="a" style="left:148px;top:873px;width:65px;height:1px;background:#8c8c8c;"></div>
<div class="t" style="left:148px;top:861px;font-size:11px;color:#000;font-family:'DejaVu Sans Condensed','Liberation Sans',sans-serif;letter-spacing:-0.3px;width:65px;text-align:center;">737</div>
<div class="t" style="left:215.7px;top:861px;font-size:12px;color:#000;font-family:'DejaVu Sans Condensed','Liberation Sans',sans-serif;letter-spacing:-0.216px;">QuizApp, QuizCasa</div>
<div class="t" style="left:387.6px;top:861px;font-size:12px;color:#000;font-family:'DejaVu Sans Condensed','Liberation Sans',sans-serif;letter-spacing:0.242px;">30/09/2019</div>
<div class="t" style="left:460.8px;top:861px;font-size:12px;color:#000;font-family:'DejaVu Sans Condensed','Liberation Sans',sans-serif;letter-spacing:-0.227px;">15:28</div>
<div class="t" style="left:518.7px;top:861px;font-size:12px;color:#000;font-family:'DejaVu Sans Condensed','Liberation Sans',sans-serif;letter-spacing:0.067px;">Quiz per ar...</div>
<div class="t tah" style="left:542.5px;top:861px;width:120px;text-align:right;font-size:12px;color:#000;letter-spacing:.1px">40</div>
<div class="t tah" style="left:634px;top:861px;width:120px;text-align:right;font-size:12px;color:#000;letter-spacing:.1px">39</div>
<div class="t tah" style="left:699px;top:861px;width:120px;text-align:right;font-size:12px;color:#000;letter-spacing:.1px">0</div>
<div class="t tah" style="left:821px;top:861px;width:120px;text-align:right;font-size:12px;color:#000;letter-spacing:.1px">20</div>
<div class="t tah" style="left:944.6px;top:861px;font-size:12px;color:#000;letter-spacing:.1px">A*1</div>
<div class="t" style="left:1062.8px;top:861px;font-size:12px;color:#000;font-family:'DejaVu Sans Condensed','Liberation Sans',sans-serif;letter-spacing:0.303px;">1. STRAD...</div>
<div class="t" style="left:1134.3px;top:861px;font-size:12px;color:#000;font-family:'DejaVu Sans Condensed','Liberation Sans',sans-serif;letter-spacing:0.235px;">Non defi...</div>
<div class="a" style="left:213px;top:824px;width:1px;height:51px;background:#000;"></div>
<div class="a" style="left:385px;top:824px;width:1px;height:51px;background:#000;"></div>
<div class="a" style="left:458px;top:824px;width:1px;height:51px;background:#000;"></div>
<div class="a" style="left:516px;top:824px;width:1px;height:51px;background:#000;"></div>
<div class="a" style="left:592px;top:824px;width:1px;height:51px;background:#000;"></div>
<div class="a" style="left:664px;top:824px;width:1px;height:51px;background:#000;"></div>
<div class="a" style="left:755px;top:824px;width:1px;height:51px;background:#000;"></div>
<div class="a" style="left:820px;top:824px;width:1px;height:51px;background:#000;"></div>
<div class="a" style="left:942px;top:824px;width:1px;height:51px;background:#000;"></div>
<div class="a" style="left:1060px;top:824px;width:1px;height:51px;background:#000;"></div>
<div class="a" style="left:1132px;top:824px;width:1px;height:51px;background:#000;"></div>
<div class="a" style="left:1197px;top:824px;width:1px;height:51px;background:#000;"></div>
<div class="a" style="left:142px;top:788px;width:1074px;height:103px;border:8px solid #ed1c24;"></div>
<div class="a" style="left:146px;top:956px;width:1118px;height:18px;background:#f0f0f0;"></div>
<div class="a" style="left:1262px;top:958px;width:1px;height:13px;background:#dcdcdc;"></div>
<div class="t" style="left:148px;top:960px;font-size:11px;color:#000;font-weight:bold;letter-spacing:0.035px;">Scaricamento risultati: Sede principale/centro 128 candidati. Completato</div>
</body></html>
